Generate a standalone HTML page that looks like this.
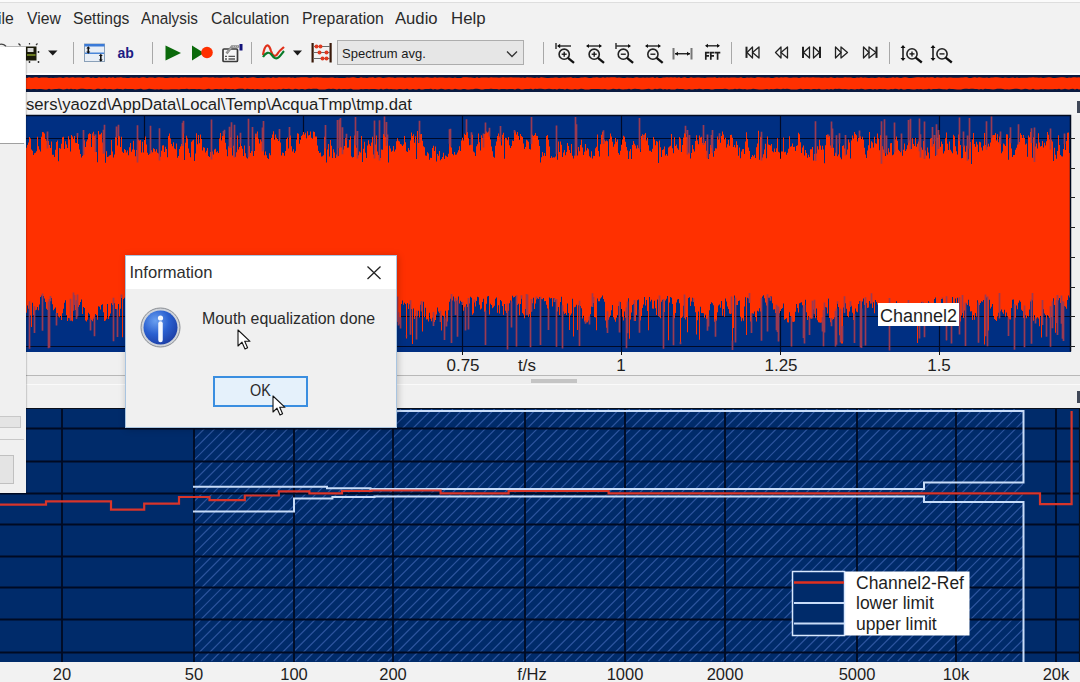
<!DOCTYPE html>
<html><head><meta charset="utf-8"><style>
*{margin:0;padding:0;box-sizing:border-box}
html,body{width:1080px;height:682px;overflow:hidden;background:#f0f0f0;font-family:"Liberation Sans", sans-serif}
.a{position:absolute}
.menu{position:absolute;top:9px;font-size:15px;color:#2a2a2a;line-height:18px;white-space:nowrap;transform:scaleY(1.1);transform-origin:0 0}
.sep{position:absolute;width:1px;background:#a8a8a8}
.lbl{position:absolute;font-size:17px;color:#1e1e1e;line-height:20px;white-space:nowrap}
#wrap{position:absolute;left:0;top:0;width:1080px;height:682px;overflow:hidden;background:#f0f0f0}
</style></head><body><div id="wrap">

<div class="a" style="left:0;top:0;width:1080px;height:2px;background:#fbfbfb"></div>
<div class="a" style="left:0;top:2px;width:1080px;height:1px;background:#dedede"></div>
<div class="a" style="left:0;top:3px;width:1080px;height:70px;background:#f2f2f2"></div>
<div class="menu" style="left:-2.4px;transform:scale(1.05,1.1)">ile</div>
<div class="menu" style="left:26.5px;transform:scale(1.05,1.1)">View</div>
<div class="menu" style="left:72.5px;transform:scale(1.04,1.1)">Settings</div>
<div class="menu" style="left:141px;transform:scale(1.02,1.1)">Analysis</div>
<div class="menu" style="left:211px;transform:scale(1.055,1.1)">Calculation</div>
<div class="menu" style="left:302px;transform:scale(1.054,1.1)">Preparation</div>
<div class="menu" style="left:395px;transform:scale(1.11,1.1)">Audio</div>
<div class="menu" style="left:450.5px;transform:scale(1.12,1.1)">Help</div>
<div class="a" style="left:0;top:73px;width:1080px;height:2px;background:#fdfdfd"></div>
<div class="sep" style="left:73px;top:42px;height:22px"></div>
<div class="sep" style="left:152px;top:42px;height:22px"></div>
<div class="sep" style="left:251px;top:42px;height:22px"></div>
<div class="sep" style="left:543px;top:42px;height:22px"></div>
<div class="sep" style="left:731px;top:42px;height:22px"></div>
<div class="sep" style="left:889px;top:42px;height:22px"></div>
<svg class="a" style="left:0;top:0" width="1080" height="75" viewBox="0 0 1080 75">
<!-- floppy partially hidden -->
<rect x="26" y="46.5" width="10.5" height="14" fill="#1a1a0a"/>
<rect x="27.5" y="48" width="6" height="4" fill="#d8d8d8"/>
<rect x="27" y="54" width="8.5" height="2" fill="#6a7a20"/>
<circle cx="38.5" cy="52" r="0.9" fill="#222"/><circle cx="38.5" cy="62" r="0.9" fill="#222"/><circle cx="29.5" cy="62" r="0.9" fill="#222"/>
<path d="M18.5,43.5l2,2M29.5,43l0,1.5M37.5,43.5l-1.5,1.5" stroke="#333" stroke-width="1.2"/>
<path d="M0,44.3c2,-0.3 4,0 6,2" stroke="#444" stroke-width="1.3" fill="none"/>
<path d="M6,46.8H26" stroke="#a8a8a8" stroke-width="1"/>
<path d="M48,50.5h9.5l-4.75,5z" fill="#1a1a1a"/>
<!-- blue rect icon -->
<rect x="84.5" y="44" width="20" height="17.5" fill="#e8eef6" stroke="#8aa0b8" stroke-width="1"/>
<rect x="84.5" y="44" width="20" height="2.5" fill="#3a7ad8"/>
<rect x="85" y="52.5" width="19" height="1.5" fill="#4a86d8"/>
<path d="M88.3,47.5v5M100.8,55v5.5" stroke="#111" stroke-width="1.6"/>
<path d="M86.3,48.5h4l-2,-2.2zM86.3,51.5h4l-2,2.2zM98.8,56h4l-2,-2.2zM98.8,59.5h4l-2,2.2z" fill="#111"/>
<text x="117.5" y="58" font-family="Liberation Sans" font-weight="bold" font-size="14" fill="#1c1c84">ab</text>
<!-- play -->
<path d="M165.5,45.5L181,53L165.5,60.5z" fill="#0b6a0b"/>
<path d="M192,45.5L204,53L192,60.5z" fill="#0b6a0b"/>
<circle cx="207" cy="52.5" r="5.8" fill="#ff3000"/>
<!-- clipboard -->
<rect x="223" y="49" width="14.5" height="12.5" rx="1" fill="#f6f6f6" stroke="#3a3a3a" stroke-width="1.7"/>
<path d="M226.5,53.5L232,46.5H239" stroke="#8a8a8a" stroke-width="2.6" fill="none"/>
<path d="M226.5,53.5L232,46.5H239" stroke="#d0d0d0" stroke-width="0.8" stroke-dasharray="1,1" fill="none"/>
<path d="M225,56.3h2M228.5,56.3h6.5M225,59h2M228.5,59h6.5" stroke="#555" stroke-width="1.3"/>
<rect x="239.5" y="44" width="3" height="6.5" fill="#12127a"/>
<!-- wave icon -->
<path d="M263,55c2,-12 6,-12 8,-4c2,6 5,6 7,2c2,-3 4,-4 6,-6" stroke="#e0301a" stroke-width="2.2" fill="none"/>
<path d="M263,57c3,-5 6,-5 8,-3c3,4 5,6 8,3c2,-2 4,-5 5,-6" stroke="#0a7a2a" stroke-width="2.2" fill="none"/>
<path d="M293,50.5h9l-4.5,5z" fill="#1a1a1a"/>
<!-- abacus -->
<rect x="311.5" y="43" width="2.2" height="19.5" fill="#3a1a0a"/>
<rect x="329.5" y="43" width="2.2" height="19.5" fill="#3a1a0a"/>
<path d="M313,46.5h17M313,52.5h17M313,58.5h17" stroke="#6a6a6a" stroke-width="1"/>
<circle cx="316.5" cy="46.5" r="2" fill="#e03a20"/><circle cx="320.5" cy="46.5" r="2" fill="#e03a20"/>
<circle cx="319.5" cy="52.5" r="2" fill="#e03a20"/><circle cx="326.5" cy="52.5" r="2" fill="#e03a20"/>
<circle cx="322.5" cy="58.5" r="2" fill="#e03a20"/><circle cx="326.5" cy="58.5" r="2" fill="#e03a20"/>

<path d="M556,43v6M558,46h13" stroke="#333" stroke-width="1.5"/><path d="M557,46l3.2,-2.2v4.4z" fill="#111"/><circle cx="564.2" cy="54.2" r="5.1" fill="none" stroke="#222" stroke-width="1.6"/><path d="M567.9,57.9L574.0,62.8" stroke="#111" stroke-width="2.3"/><path d="M561.7,54.2h5" stroke="#111" stroke-width="1.3"/><path d="M564.2,51.7v5" stroke="#111" stroke-width="1.3"/><path d="M587,46h14" stroke="#333" stroke-width="1.5"/><path d="M586,46l3,-2v4zM602,46l-3,-2v4z" fill="#111"/><circle cx="594.2" cy="54.2" r="5.1" fill="none" stroke="#222" stroke-width="1.6"/><path d="M597.9,57.9L604.0,62.8" stroke="#111" stroke-width="2.3"/><path d="M591.7,54.2h5" stroke="#111" stroke-width="1.3"/><path d="M594.2,51.7v5" stroke="#111" stroke-width="1.3"/><path d="M616,43v6M616,46h14" stroke="#333" stroke-width="1.5"/><path d="M631,46l-3,-2v4z" fill="#111"/><circle cx="623.3" cy="54.2" r="5.1" fill="none" stroke="#222" stroke-width="1.6"/><path d="M627.0,57.9L633.1,62.8" stroke="#111" stroke-width="2.3"/><path d="M620.8,54.2h5" stroke="#111" stroke-width="1.3"/><path d="M646,46h14" stroke="#333" stroke-width="1.5"/><path d="M645,46l3,-2v4zM661,46l-3,-2v4z" fill="#111"/><circle cx="652.9" cy="54.2" r="5.1" fill="none" stroke="#222" stroke-width="1.6"/><path d="M656.6,57.9L662.7,62.8" stroke="#111" stroke-width="2.3"/><path d="M650.4,54.2h5" stroke="#111" stroke-width="1.3"/><path d="M673.5,48v11.5M691.5,48v11.5" stroke="#777" stroke-width="2"/><path d="M675,53.75h15" stroke="#111" stroke-width="1.3"/><path d="M675,53.75l3,-2v4zM690,53.75l-3,-2v4z" fill="#111"/><path d="M706,45.8h13" stroke="#333" stroke-width="1.5"/><path d="M705,45.8l3,-2v4zM720,45.8l-3,-2v4z" fill="#111"/><path d="M705.8,59.8V52.7H709.5M705.8,55.8H709M710.8,59.8V52.7H714.5M710.8,55.8H714M715,52.7H720.3M717.6,52.7V59.8" stroke="#1e1e1e" stroke-width="1.7" fill="none"/><path d="M746.5,46.7v11.2" stroke="#222" stroke-width="2"/><path d="M747.0,52.5L752.5,47.0L752.5,58.0z" fill="none" stroke="#222" stroke-width="1.3" stroke-linejoin="round"/><path d="M752.5,52.5L759.0,47.0L759.0,58.0z" fill="none" stroke="#222" stroke-width="1.3" stroke-linejoin="round"/><path d="M775.5,52.5L781.0,47.0L781.0,58.0z" fill="none" stroke="#222" stroke-width="1.3" stroke-linejoin="round"/><path d="M781.0,52.5L787.5,47.0L787.5,58.0z" fill="none" stroke="#222" stroke-width="1.3" stroke-linejoin="round"/><path d="M803,46.7v11.2M820,46.7v11.2" stroke="#222" stroke-width="2"/><path d="M803.5,52.5L809.5,47.0L809.5,58.0z" fill="none" stroke="#222" stroke-width="1.3" stroke-linejoin="round"/><path d="M819.5,52.5L813.5,47.0L813.5,58.0z" fill="none" stroke="#222" stroke-width="1.3" stroke-linejoin="round"/><path d="M841.0,52.5L835.5,47.0L835.5,58.0z" fill="none" stroke="#222" stroke-width="1.3" stroke-linejoin="round"/><path d="M847.5,52.5L841.0,47.0L841.0,58.0z" fill="none" stroke="#222" stroke-width="1.3" stroke-linejoin="round"/><path d="M869.0,52.5L863.5,47.0L863.5,58.0z" fill="none" stroke="#222" stroke-width="1.3" stroke-linejoin="round"/><path d="M876.0,52.5L869.0,47.0L869.0,58.0z" fill="none" stroke="#222" stroke-width="1.3" stroke-linejoin="round"/><path d="M876.5,46.7v11.2" stroke="#222" stroke-width="2"/><path d="M903.0,46v14" stroke="#222" stroke-width="1.6"/><path d="M903.0,45l-2.5,3h5zM903.0,61l-2.5,-3h5z" fill="#111"/><circle cx="912.0" cy="53.9" r="5.1" fill="none" stroke="#222" stroke-width="1.6"/><path d="M915.7,57.6L921.8,62.5" stroke="#111" stroke-width="2.3"/><path d="M909.5,53.9h5" stroke="#111" stroke-width="1.3"/><path d="M912.0,51.4v5" stroke="#111" stroke-width="1.3"/><path d="M933.0,46v14" stroke="#222" stroke-width="1.6"/><path d="M933.0,45l-2.5,3h5zM933.0,61l-2.5,-3h5z" fill="#111"/><circle cx="942.0" cy="53.9" r="5.1" fill="none" stroke="#222" stroke-width="1.6"/><path d="M945.7,57.6L951.8,62.5" stroke="#111" stroke-width="2.3"/><path d="M939.5,53.9h5" stroke="#111" stroke-width="1.3"/>
</svg>
<div class="a" style="left:337px;top:40px;width:187px;height:25px;background:#e6e6e6;border:1px solid #adadad"></div>
<div class="a" style="left:342px;top:46px;font-size:13px;color:#1a1a1a;line-height:15px;white-space:nowrap">Spectrum avg.</div>
<svg class="a" style="left:505px;top:48px" width="14" height="12"><path d="M2,3.5l5,5l5,-5" stroke="#333" stroke-width="1.3" fill="none"/></svg>
<div class="a" style="left:25px;top:75px;width:1055px;height:17px;background:#0a1a40"></div>
<svg class="a" style="left:0;top:0" width="1080" height="95"><path d="M25,77.3L27,77.9L29,77.2L31,77.7L33,77.7L35,77.3L37,77.3L39,77.9L41,77.6L43,77.6L45,77.6L47,77.5L49,78.0L51,77.7L53,77.9L55,77.8L57,77.7L59,77.4L61,77.6L63,77.9L65,77.5L67,77.3L69,77.7L71,77.6L73,77.3L75,77.7L77,77.6L79,77.4L81,77.5L83,77.9L85,77.4L87,77.3L89,77.3L91,78.0L93,77.5L95,77.9L97,77.9L99,77.3L101,77.7L103,77.5L105,77.6L107,77.9L109,77.2L111,77.7L113,77.3L115,77.9L117,77.6L119,77.4L121,77.2L123,77.8L125,77.8L127,77.9L129,78.0L131,77.6L133,77.8L135,77.7L137,77.5L139,77.9L141,77.4L143,77.2L145,77.5L147,78.0L149,77.5L151,77.6L153,77.6L155,78.0L157,77.6L159,77.3L161,77.6L163,77.5L165,77.9L167,77.9L169,77.7L171,77.4L173,77.8L175,77.5L177,77.6L179,78.0L181,77.3L183,77.5L185,77.2L187,77.5L189,77.4L191,77.5L193,77.4L195,77.5L197,77.4L199,77.6L201,77.7L203,77.3L205,77.3L207,77.3L209,77.5L211,77.4L213,77.3L215,77.7L217,77.4L219,77.7L221,77.7L223,77.6L225,77.5L227,77.5L229,77.3L231,77.9L233,77.5L235,77.4L237,77.3L239,77.6L241,78.0L243,78.0L245,77.2L247,78.0L249,77.7L251,77.5L253,77.3L255,77.4L257,77.9L259,77.9L261,77.7L263,77.9L265,77.7L267,77.5L269,77.6L271,77.9L273,77.3L275,77.8L277,77.7L279,77.3L281,77.6L283,77.6L285,77.5L287,77.5L289,77.2L291,77.7L293,77.4L295,77.9L297,77.5L299,77.6L301,77.2L303,77.3L305,77.2L307,77.3L309,77.7L311,77.7L313,77.2L315,77.6L317,77.2L319,77.6L321,77.5L323,77.7L325,77.8L327,77.8L329,77.8L331,77.4L333,77.5L335,77.9L337,77.7L339,77.9L341,78.0L343,77.9L345,77.9L347,77.6L349,77.8L351,77.6L353,77.2L355,77.6L357,77.9L359,77.9L361,77.3L363,77.7L365,77.7L367,78.0L369,77.6L371,77.5L373,77.3L375,77.9L377,77.6L379,77.3L381,77.6L383,77.9L385,77.8L387,77.6L389,77.3L391,77.6L393,77.6L395,77.9L397,77.5L399,77.6L401,77.5L403,77.6L405,78.0L407,77.6L409,77.4L411,77.4L413,77.9L415,77.2L417,77.6L419,77.4L421,77.6L423,77.7L425,77.6L427,77.3L429,77.4L431,77.7L433,77.7L435,77.3L437,77.8L439,77.5L441,77.6L443,77.6L445,77.8L447,77.7L449,77.6L451,77.7L453,77.9L455,77.5L457,78.0L459,78.0L461,78.0L463,77.2L465,77.3L467,77.2L469,77.5L471,77.6L473,77.8L475,78.0L477,77.3L479,77.9L481,77.6L483,77.5L485,77.4L487,77.5L489,77.7L491,77.3L493,77.6L495,77.4L497,77.5L499,77.7L501,77.4L503,77.2L505,77.6L507,77.5L509,77.6L511,77.3L513,77.4L515,77.4L517,77.4L519,77.5L521,77.8L523,77.6L525,77.9L527,77.3L529,77.6L531,77.4L533,77.7L535,77.9L537,77.4L539,77.9L541,77.3L543,77.4L545,77.7L547,77.9L549,78.0L551,77.7L553,77.7L555,77.6L557,77.4L559,77.9L561,77.8L563,77.6L565,77.7L567,77.6L569,77.4L571,77.3L573,77.9L575,77.8L577,77.9L579,77.9L581,77.6L583,77.6L585,77.3L587,77.4L589,77.9L591,78.0L593,77.4L595,77.5L597,77.3L599,77.8L601,77.8L603,77.3L605,77.8L607,77.3L609,77.6L611,77.2L613,77.3L615,77.3L617,77.8L619,77.6L621,77.7L623,78.0L625,78.0L627,77.5L629,77.7L631,77.8L633,78.0L635,77.6L637,77.3L639,77.8L641,77.7L643,77.6L645,77.7L647,77.6L649,77.7L651,77.4L653,77.3L655,77.9L657,77.3L659,77.9L661,78.0L663,77.4L665,77.4L667,77.2L669,77.6L671,77.3L673,77.5L675,77.3L677,77.8L679,77.2L681,77.9L683,77.4L685,77.3L687,78.0L689,77.9L691,77.2L693,77.7L695,77.7L697,77.4L699,77.4L701,77.7L703,77.7L705,77.9L707,77.6L709,77.6L711,77.6L713,77.6L715,77.2L717,77.9L719,77.4L721,77.7L723,77.6L725,77.8L727,77.6L729,77.7L731,77.4L733,77.5L735,77.4L737,77.8L739,77.8L741,77.3L743,78.0L745,77.9L747,77.5L749,77.8L751,77.5L753,77.8L755,77.9L757,77.3L759,77.2L761,77.5L763,77.6L765,77.7L767,77.4L769,77.5L771,77.9L773,77.9L775,77.4L777,77.3L779,77.7L781,77.2L783,77.5L785,77.3L787,77.3L789,77.8L791,77.8L793,77.4L795,77.6L797,77.4L799,77.9L801,77.4L803,77.3L805,77.5L807,77.3L809,77.6L811,77.5L813,77.3L815,77.6L817,77.4L819,77.4L821,77.8L823,77.8L825,77.6L827,77.8L829,77.7L831,77.2L833,77.8L835,77.9L837,77.5L839,77.7L841,77.7L843,77.8L845,77.2L847,77.5L849,77.5L851,77.4L853,77.9L855,77.9L857,77.6L859,77.8L861,77.3L863,77.7L865,77.5L867,77.7L869,77.9L871,77.8L873,77.8L875,78.0L877,77.7L879,77.3L881,77.8L883,77.4L885,77.8L887,77.9L889,77.8L891,77.7L893,77.3L895,77.7L897,77.3L899,77.8L901,77.9L903,77.5L905,77.3L907,77.5L909,77.9L911,78.0L913,77.7L915,77.5L917,77.3L919,77.3L921,77.6L923,77.2L925,77.7L927,77.3L929,77.5L931,77.2L933,77.3L935,78.0L937,77.3L939,77.5L941,77.8L943,77.4L945,77.6L947,77.7L949,77.5L951,77.5L953,77.8L955,77.8L957,77.8L959,77.7L961,77.4L963,77.5L965,77.2L967,77.3L969,78.0L971,77.9L973,77.6L975,77.2L977,77.7L979,77.3L981,77.6L983,77.7L985,77.7L987,77.4L989,78.0L991,77.6L993,77.6L995,77.3L997,77.3L999,77.5L1001,77.7L1003,77.9L1005,77.6L1007,77.7L1009,77.9L1011,77.7L1013,77.5L1015,78.0L1017,77.5L1019,78.0L1021,77.7L1023,77.8L1025,77.8L1027,77.7L1029,77.6L1031,77.6L1033,77.3L1035,77.5L1037,77.5L1039,77.7L1041,77.4L1043,77.9L1045,77.8L1047,77.6L1049,77.2L1051,77.6L1053,78.0L1055,77.9L1057,77.8L1059,77.6L1061,77.3L1063,77.2L1065,77.6L1067,77.9L1069,77.6L1071,77.8L1073,77.3L1075,77.2L1077,77.6L1079,77.3L1081,77.8L1081,89.3L1079,89.4L1077,88.7L1075,89.4L1073,88.8L1071,89.1L1069,89.5L1067,89.2L1065,88.7L1063,89.2L1061,89.4L1059,88.8L1057,89.2L1055,88.9L1053,89.3L1051,89.3L1049,89.3L1047,89.2L1045,89.1L1043,89.6L1041,89.0L1039,89.4L1037,89.5L1035,89.5L1033,88.7L1031,89.5L1029,89.5L1027,89.0L1025,88.8L1023,89.2L1021,89.4L1019,89.1L1017,88.7L1015,88.7L1013,89.1L1011,89.3L1009,89.6L1007,89.3L1005,89.4L1003,89.0L1001,88.8L999,88.8L997,88.8L995,89.3L993,89.5L991,89.2L989,89.0L987,88.9L985,88.7L983,89.4L981,89.1L979,89.5L977,88.9L975,88.9L973,88.8L971,88.8L969,89.0L967,88.7L965,88.8L963,88.9L961,89.4L959,89.6L957,89.4L955,89.3L953,88.9L951,89.1L949,88.7L947,89.5L945,89.3L943,89.2L941,89.1L939,88.7L937,89.1L935,88.9L933,89.1L931,89.4L929,88.7L927,89.2L925,89.2L923,89.5L921,89.1L919,89.3L917,88.9L915,89.6L913,89.6L911,89.2L909,89.1L907,89.0L905,89.4L903,89.4L901,88.8L899,89.5L897,89.1L895,88.8L893,89.2L891,89.1L889,89.6L887,89.5L885,89.0L883,89.2L881,89.0L879,89.0L877,89.4L875,89.1L873,89.5L871,89.1L869,89.0L867,89.2L865,89.5L863,89.0L861,88.7L859,89.3L857,88.9L855,89.5L853,89.2L851,88.9L849,89.4L847,89.3L845,89.1L843,89.2L841,89.1L839,88.8L837,89.1L835,88.8L833,89.6L831,89.0L829,89.4L827,89.0L825,89.4L823,89.6L821,89.5L819,88.8L817,89.3L815,88.9L813,88.9L811,89.6L809,88.9L807,88.9L805,88.9L803,89.5L801,88.7L799,88.9L797,89.4L795,89.5L793,89.6L791,89.4L789,88.9L787,88.7L785,89.1L783,88.7L781,89.3L779,89.1L777,88.7L775,89.0L773,89.3L771,88.9L769,89.6L767,89.0L765,89.2L763,89.5L761,89.4L759,89.4L757,89.3L755,88.9L753,88.8L751,89.2L749,89.2L747,89.5L745,88.9L743,89.3L741,89.0L739,88.8L737,89.3L735,88.7L733,89.2L731,89.3L729,89.5L727,88.9L725,88.8L723,89.1L721,89.1L719,89.1L717,89.0L715,89.1L713,89.4L711,89.4L709,88.9L707,89.1L705,88.9L703,89.5L701,89.0L699,88.8L697,89.2L695,89.0L693,89.5L691,89.5L689,88.9L687,89.4L685,89.6L683,88.9L681,89.0L679,88.9L677,88.8L675,89.5L673,89.5L671,89.5L669,89.0L667,89.4L665,89.1L663,89.5L661,88.7L659,88.8L657,89.3L655,88.8L653,89.5L651,89.4L649,88.8L647,89.1L645,89.2L643,89.4L641,89.5L639,88.9L637,89.1L635,88.8L633,88.9L631,89.4L629,88.8L627,89.3L625,89.3L623,89.4L621,89.3L619,88.7L617,89.3L615,88.9L613,88.8L611,89.2L609,89.6L607,89.4L605,89.1L603,89.3L601,89.3L599,89.1L597,88.9L595,89.1L593,89.0L591,89.0L589,89.4L587,89.5L585,89.6L583,89.0L581,88.7L579,89.3L577,89.4L575,88.9L573,89.6L571,89.4L569,89.2L567,88.7L565,89.6L563,89.1L561,89.0L559,88.8L557,89.4L555,89.1L553,89.2L551,88.9L549,88.7L547,88.9L545,89.2L543,88.9L541,88.8L539,88.8L537,89.0L535,88.8L533,89.5L531,88.8L529,89.0L527,89.1L525,89.0L523,89.6L521,89.4L519,88.8L517,88.8L515,89.4L513,89.1L511,89.1L509,88.9L507,89.2L505,89.0L503,89.0L501,88.9L499,89.5L497,89.0L495,89.0L493,89.0L491,88.8L489,88.9L487,88.9L485,89.0L483,89.4L481,89.4L479,89.1L477,88.8L475,88.8L473,89.2L471,89.3L469,89.5L467,89.5L465,88.9L463,88.9L461,89.4L459,89.6L457,89.3L455,88.8L453,89.5L451,89.4L449,89.1L447,89.3L445,89.4L443,88.9L441,88.8L439,89.3L437,89.5L435,89.0L433,89.4L431,88.8L429,88.9L427,89.1L425,89.0L423,89.5L421,89.4L419,88.8L417,89.4L415,89.4L413,89.1L411,89.5L409,89.5L407,88.7L405,89.3L403,89.6L401,89.0L399,89.0L397,89.4L395,89.2L393,89.3L391,88.9L389,89.3L387,88.8L385,88.9L383,89.4L381,88.8L379,89.5L377,89.3L375,88.9L373,89.0L371,89.0L369,89.2L367,89.1L365,89.1L363,89.2L361,88.9L359,89.4L357,89.5L355,89.5L353,89.6L351,88.8L349,89.0L347,89.2L345,88.9L343,89.0L341,89.3L339,88.7L337,89.4L335,88.9L333,88.8L331,89.0L329,88.7L327,89.0L325,89.4L323,89.4L321,89.5L319,89.4L317,88.8L315,88.8L313,88.7L311,89.1L309,88.7L307,89.0L305,89.6L303,89.1L301,88.9L299,89.4L297,89.1L295,88.8L293,89.4L291,89.3L289,88.8L287,89.1L285,89.1L283,88.8L281,89.5L279,89.0L277,89.6L275,89.4L273,89.3L271,89.4L269,89.1L267,89.5L265,89.1L263,89.4L261,89.4L259,89.3L257,89.1L255,89.5L253,89.1L251,89.2L249,89.0L247,88.8L245,89.5L243,88.8L241,88.8L239,88.7L237,89.0L235,89.4L233,89.1L231,89.3L229,88.9L227,89.0L225,88.7L223,89.5L221,89.0L219,89.2L217,88.9L215,89.1L213,89.5L211,89.4L209,88.8L207,89.0L205,89.4L203,89.5L201,89.2L199,89.0L197,89.2L195,89.0L193,89.0L191,89.1L189,89.2L187,88.8L185,89.0L183,89.0L181,89.1L179,89.4L177,89.3L175,89.2L173,89.2L171,89.2L169,89.5L167,89.6L165,89.5L163,89.5L161,88.9L159,89.5L157,89.2L155,89.4L153,89.2L151,89.0L149,88.8L147,89.3L145,89.5L143,89.5L141,88.7L139,88.9L137,89.3L135,89.4L133,89.0L131,88.9L129,89.0L127,88.9L125,88.7L123,89.5L121,89.1L119,89.0L117,88.7L115,89.3L113,89.5L111,89.0L109,88.9L107,89.3L105,88.8L103,89.1L101,89.2L99,88.7L97,88.8L95,89.6L93,89.4L91,88.9L89,89.1L87,89.3L85,89.1L83,88.7L81,88.8L79,89.0L77,89.4L75,89.1L73,89.3L71,88.8L69,89.2L67,88.8L65,89.3L63,89.4L61,88.9L59,88.8L57,88.9L55,89.0L53,89.3L51,89.5L49,88.8L47,89.6L45,89.6L43,89.3L41,89.0L39,89.1L37,89.3L35,89.0L33,89.1L31,89.2L29,89.0L27,88.9L25,89.2Z" fill="#ff3000"/></svg>
<div class="a" style="left:0;top:92px;width:1080px;height:23px;background:#f3f3f3"></div>
<div class="a" style="left:26px;top:96px;font-size:16.7px;color:#1e1e1e;line-height:18px;white-space:nowrap">sers\yaozd\AppData\Local\Temp\AcquaTmp\tmp.dat</div>
<div class="a" style="left:1077px;top:101px;width:3px;height:12px;background:#404858"></div>
<div class="a" style="left:25px;top:115px;width:1046px;height:237px;background:#002f82"></div>
<svg class="a" style="left:0;top:0" width="1080" height="400">
<path d="M25,138.5H1070M25,168.5H1070M25,197.5H1070M25,227.5H1070M25,257.5H1070M25,287.5H1070M25,316.5H1070M25,346.5H1070M144.5,115V352M303.5,115V352M462.5,115V352M621.5,115V352M780.5,115V352M939.5,115V352" stroke="#000a28" stroke-width="1.2" fill="none"/>
<path d="M25,143.0L25,143.0L26,143.0L26,147.8L27,147.8L27,144.9L28,144.9L28,142.4L29,142.4L29,137.0L30,137.0L30,138.4L31,138.4L31,149.5L32,149.5L32,150.8L33,150.8L33,155.0L34,155.0L34,153.2L35,153.2L35,152.8L36,152.8L36,151.3L37,151.3L37,136.7L38,136.7L38,146.2L39,146.2L39,149.6L40,149.6L40,151.4L41,151.4L41,136.7L42,136.7L42,132.0L43,132.0L43,132.2L44,132.2L44,133.5L45,133.5L45,138.8L46,138.8L46,140.8L47,140.8L47,146.6L48,146.6L48,140.9L49,140.9L49,145.0L50,145.0L50,148.1L51,148.1L51,141.6L52,141.6L52,154.8L53,154.8L53,154.7L54,154.7L54,157.0L55,157.0L55,149.7L56,149.7L56,142.1L57,142.1L57,140.6L58,140.6L58,161.3L59,161.3L59,147.9L60,147.9L60,148.7L61,148.7L61,143.7L62,143.7L62,137.3L63,137.3L63,136.8L64,136.8L64,149.1L65,149.1L65,141.2L66,141.2L66,144.6L67,144.6L67,148.1L68,148.1L68,136.2L69,136.2L69,139.6L70,139.6L70,151.6L71,151.6L71,135.1L72,135.1L72,136.5L73,136.5L73,138.7L74,138.7L74,135.9L75,135.9L75,142.7L76,142.7L76,143.1L77,143.1L77,134.6L78,134.6L78,143.9L79,143.9L79,149.6L80,149.6L80,154.0L81,154.0L81,157.4L82,157.4L82,155.8L83,155.8L83,153.1L84,153.1L84,140.2L85,140.2L85,146.9L86,146.9L86,141.4L87,141.4L87,139.4L88,139.4L88,134.2L89,134.2L89,133.2L90,133.2L90,134.1L91,134.1L91,147.0L92,147.0L92,133.6L93,133.6L93,131.8L94,131.8L94,135.9L95,135.9L95,150.0L96,150.0L96,152.1L97,152.1L97,162.2L98,162.2L98,130.9L99,130.9L99,134.5L100,134.5L100,134.2L101,134.2L101,132.8L102,132.8L102,142.5L103,142.5L103,151.8L104,151.8L104,150.4L105,150.4L105,162.7L106,162.7L106,151.3L107,151.3L107,157.1L108,157.1L108,156.4L109,156.4L109,155.6L110,155.6L110,155.1L111,155.1L111,140.0L112,140.0L112,151.6L113,151.6L113,157.5L114,157.5L114,154.6L115,154.6L115,137.0L116,137.0L116,136.0L117,136.0L117,145.5L118,145.5L118,133.9L119,133.9L119,136.3L120,136.3L120,147.1L121,147.1L121,136.8L122,136.8L122,151.8L123,151.8L123,152.9L124,152.9L124,149.0L125,149.0L125,149.9L126,149.9L126,152.5L127,152.5L127,150.6L128,150.6L128,155.3L129,155.3L129,147.3L130,147.3L130,143.1L131,143.1L131,151.7L132,151.7L132,149.4L133,149.4L133,140.8L134,140.8L134,149.8L135,149.8L135,156.3L136,156.3L136,150.1L137,150.1L137,160.6L138,160.6L138,139.5L139,139.5L139,140.5L140,140.5L140,140.0L141,140.0L141,152.4L142,152.4L142,141.7L143,141.7L143,152.4L144,152.4L144,139.9L145,139.9L145,136.6L146,136.6L146,144.4L147,144.4L147,152.8L148,152.8L148,155.0L149,155.0L149,153.7L150,153.7L150,151.6L151,151.6L151,150.3L152,150.3L152,152.2L153,152.2L153,148.3L154,148.3L154,149.1L155,149.1L155,151.6L156,151.6L156,149.2L157,149.2L157,152.8L158,152.8L158,153.6L159,153.6L159,158.5L160,158.5L160,156.7L161,156.7L161,150.7L162,150.7L162,145.6L163,145.6L163,145.3L164,145.3L164,152.0L165,152.0L165,146.8L166,146.8L166,149.1L167,149.1L167,157.3L168,157.3L168,136.1L169,136.1L169,133.5L170,133.5L170,138.4L171,138.4L171,143.9L172,143.9L172,146.3L173,146.3L173,142.3L174,142.3L174,148.6L175,148.6L175,149.3L176,149.3L176,143.5L177,143.5L177,157.7L178,157.7L178,156.0L179,156.0L179,148.9L180,148.9L180,146.6L181,146.6L181,144.1L182,144.1L182,144.0L183,144.0L183,131.4L184,131.4L184,160.0L185,160.0L185,142.7L186,142.7L186,135.8L187,135.8L187,138.5L188,138.5L188,148.4L189,148.4L189,153.0L190,153.0L190,157.3L191,157.3L191,141.8L192,141.8L192,140.4L193,140.4L193,139.7L194,139.7L194,160.9L195,160.9L195,153.5L196,153.5L196,133.3L197,133.3L197,144.3L198,144.3L198,135.0L199,135.0L199,143.3L200,143.3L200,134.5L201,134.5L201,139.0L202,139.0L202,150.5L203,150.5L203,147.2L204,147.2L204,147.8L205,147.8L205,152.4L206,152.4L206,150.7L207,150.7L207,147.9L208,147.9L208,156.0L209,156.0L209,157.1L210,157.1L210,152.1L211,152.1L211,157.6L212,157.6L212,151.4L213,151.4L213,154.6L214,154.6L214,149.6L215,149.6L215,148.8L216,148.8L216,152.3L217,152.3L217,151.2L218,151.2L218,153.1L219,153.1L219,138.6L220,138.6L220,133.1L221,133.1L221,140.4L222,140.4L222,135.9L223,135.9L223,133.8L224,133.8L224,131.8L225,131.8L225,142.8L226,142.8L226,149.5L227,149.5L227,156.2L228,156.2L228,146.2L229,146.2L229,145.8L230,145.8L230,137.2L231,137.2L231,145.9L232,145.9L232,155.6L233,155.6L233,145.8L234,145.8L234,155.5L235,155.5L235,156.7L236,156.7L236,152.3L237,152.3L237,135.6L238,135.6L238,149.5L239,149.5L239,147.0L240,147.0L240,141.5L241,141.5L241,146.0L242,146.0L242,148.8L243,148.8L243,156.1L244,156.1L244,145.4L245,145.4L245,153.3L246,153.3L246,157.4L247,157.4L247,158.5L248,158.5L248,154.9L249,154.9L249,146.1L250,146.1L250,152.9L251,152.9L251,150.9L252,150.9L252,149.6L253,149.6L253,156.1L254,156.1L254,151.1L255,151.1L255,133.8L256,133.8L256,135.1L257,135.1L257,131.5L258,131.5L258,138.8L259,138.8L259,143.6L260,143.6L260,139.5L261,139.5L261,141.5L262,141.5L262,149.4L263,149.4L263,148.3L264,148.3L264,155.3L265,155.3L265,151.6L266,151.6L266,155.3L267,155.3L267,157.9L268,157.9L268,158.9L269,158.9L269,153.3L270,153.3L270,155.3L271,155.3L271,138.1L272,138.1L272,134.4L273,134.4L273,131.2L274,131.2L274,139.7L275,139.7L275,134.4L276,134.4L276,137.7L277,137.7L277,139.0L278,139.0L278,141.1L279,141.1L279,138.3L280,138.3L280,142.6L281,142.6L281,155.4L282,155.4L282,152.4L283,152.4L283,153.1L284,153.1L284,155.7L285,155.7L285,151.1L286,151.1L286,139.1L287,139.1L287,137.6L288,137.6L288,148.6L289,148.6L289,135.7L290,135.7L290,135.4L291,135.4L291,146.2L292,146.2L292,151.6L293,151.6L293,149.2L294,149.2L294,153.1L295,153.1L295,151.3L296,151.3L296,139.8L297,139.8L297,133.3L298,133.3L298,133.8L299,133.8L299,143.7L300,143.7L300,139.9L301,139.9L301,136.0L302,136.0L302,134.8L303,134.8L303,132.0L304,132.0L304,134.6L305,134.6L305,132.8L306,132.8L306,138.2L307,138.2L307,131.3L308,131.3L308,135.4L309,135.4L309,135.1L310,135.1L310,131.4L311,131.4L311,137.8L312,137.8L312,138.5L313,138.5L313,131.5L314,131.5L314,131.9L315,131.9L315,136.4L316,136.4L316,136.6L317,136.6L317,145.5L318,145.5L318,150.9L319,150.9L319,153.1L320,153.1L320,152.4L321,152.4L321,156.6L322,156.6L322,156.2L323,156.2L323,155.2L324,155.2L324,136.8L325,136.8L325,146.6L326,146.6L326,162.6L327,162.6L327,149.4L328,149.4L328,143.9L329,143.9L329,156.4L330,156.4L330,140.1L331,140.1L331,145.7L332,145.7L332,158.0L333,158.0L333,149.3L334,149.3L334,152.5L335,152.5L335,158.1L336,158.1L336,154.4L337,154.4L337,154.4L338,154.4L338,155.9L339,155.9L339,146.1L340,146.1L340,144.9L341,144.9L341,147.3L342,147.3L342,152.3L343,152.3L343,149.4L344,149.4L344,146.1L345,146.1L345,138.1L346,138.1L346,138.2L347,138.2L347,147.7L348,147.7L348,147.4L349,147.4L349,139.9L350,139.9L350,136.3L351,136.3L351,156.6L352,156.6L352,157.6L353,157.6L353,156.9L354,156.9L354,135.6L355,135.6L355,143.3L356,143.3L356,147.8L357,147.8L357,156.5L358,156.5L358,155.2L359,155.2L359,151.5L360,151.5L360,152.6L361,152.6L361,135.9L362,135.9L362,162.0L363,162.0L363,148.7L364,148.7L364,141.7L365,141.7L365,152.8L366,152.8L366,158.0L367,158.0L367,145.6L368,145.6L368,140.2L369,140.2L369,144.3L370,144.3L370,146.1L371,146.1L371,142.5L372,142.5L372,136.7L373,136.7L373,154.6L374,154.6L374,156.5L375,156.5L375,144.5L376,144.5L376,135.6L377,135.6L377,151.5L378,151.5L378,155.0L379,155.0L379,158.5L380,158.5L380,158.1L381,158.1L381,149.6L382,149.6L382,149.8L383,149.8L383,133.9L384,133.9L384,133.8L385,133.8L385,136.8L386,136.8L386,143.7L387,143.7L387,138.8L388,138.8L388,162.6L389,162.6L389,145.7L390,145.7L390,148.4L391,148.4L391,151.7L392,151.7L392,150.7L393,150.7L393,146.0L394,146.0L394,151.5L395,151.5L395,149.4L396,149.4L396,141.2L397,141.2L397,138.2L398,138.2L398,140.7L399,140.7L399,141.5L400,141.5L400,144.1L401,144.1L401,144.5L402,144.5L402,146.1L403,146.1L403,144.6L404,144.6L404,136.1L405,136.1L405,142.2L406,142.2L406,151.3L407,151.3L407,151.9L408,151.9L408,148.0L409,148.0L409,150.2L410,150.2L410,140.6L411,140.6L411,132.5L412,132.5L412,136.1L413,136.1L413,134.2L414,134.2L414,142.8L415,142.8L415,136.2L416,136.2L416,159.0L417,159.0L417,131.1L418,131.1L418,142.9L419,142.9L419,140.8L420,140.8L420,134.2L421,134.2L421,133.9L422,133.9L422,140.7L423,140.7L423,146.3L424,146.3L424,147.2L425,147.2L425,155.6L426,155.6L426,155.8L427,155.8L427,152.3L428,152.3L428,153.4L429,153.4L429,159.8L430,159.8L430,157.8L431,157.8L431,158.0L432,158.0L432,148.1L433,148.1L433,145.7L434,145.7L434,150.9L435,150.9L435,146.4L436,146.4L436,161.4L437,161.4L437,154.0L438,154.0L438,155.7L439,155.7L439,151.0L440,151.0L440,160.3L441,160.3L441,158.9L442,158.9L442,156.9L443,156.9L443,152.7L444,152.7L444,159.1L445,159.1L445,155.4L446,155.4L446,156.3L447,156.3L447,157.1L448,157.1L448,153.8L449,153.8L449,141.7L450,141.7L450,144.5L451,144.5L451,147.6L452,147.6L452,154.1L453,154.1L453,155.3L454,155.3L454,152.1L455,152.1L455,154.7L456,154.7L456,154.5L457,154.5L457,152.6L458,152.6L458,150.2L459,150.2L459,146.3L460,146.3L460,150.9L461,150.9L461,140.5L462,140.5L462,137.8L463,137.8L463,140.5L464,140.5L464,133.8L465,133.8L465,134.9L466,134.9L466,131.3L467,131.3L467,132.1L468,132.1L468,138.3L469,138.3L469,145.2L470,145.2L470,144.7L471,144.7L471,143.0L472,143.0L472,134.7L473,134.7L473,151.6L474,151.6L474,152.6L475,152.6L475,155.9L476,155.9L476,146.2L477,146.2L477,144.2L478,144.2L478,133.6L479,133.6L479,142.3L480,142.3L480,150.5L481,150.5L481,135.2L482,135.2L482,138.1L483,138.1L483,145.6L484,145.6L484,134.1L485,134.1L485,131.4L486,131.4L486,131.5L487,131.5L487,132.4L488,132.4L488,131.5L489,131.5L489,134.5L490,134.5L490,139.4L491,139.4L491,146.6L492,146.6L492,151.2L493,151.2L493,156.8L494,156.8L494,157.8L495,157.8L495,145.8L496,145.8L496,141.5L497,141.5L497,135.9L498,135.9L498,133.6L499,133.6L499,136.5L500,136.5L500,139.5L501,139.5L501,145.5L502,145.5L502,134.8L503,134.8L503,132.7L504,132.7L504,158.7L505,158.7L505,137.7L506,137.7L506,138.3L507,138.3L507,140.3L508,140.3L508,136.9L509,136.9L509,145.2L510,145.2L510,147.9L511,147.9L511,146.1L512,146.1L512,140.4L513,140.4L513,140.9L514,140.9L514,131.1L515,131.1L515,131.4L516,131.4L516,134.4L517,134.4L517,132.0L518,132.0L518,136.0L519,136.0L519,140.1L520,140.1L520,134.0L521,134.0L521,136.0L522,136.0L522,137.1L523,137.1L523,143.4L524,143.4L524,148.9L525,148.9L525,147.1L526,147.1L526,139.7L527,139.7L527,140.6L528,140.6L528,141.8L529,141.8L529,148.9L530,148.9L530,149.6L531,149.6L531,142.1L532,142.1L532,134.7L533,134.7L533,135.9L534,135.9L534,134.9L535,134.9L535,133.1L536,133.1L536,135.8L537,135.8L537,136.0L538,136.0L538,139.9L539,139.9L539,146.0L540,146.0L540,162.4L541,162.4L541,157.2L542,157.2L542,152.0L543,152.0L543,155.7L544,155.7L544,153.1L545,153.1L545,156.1L546,156.1L546,136.0L547,136.0L547,134.9L548,134.9L548,139.8L549,139.8L549,146.6L550,146.6L550,158.0L551,158.0L551,156.2L552,156.2L552,157.8L553,157.8L553,157.3L554,157.3L554,157.5L555,157.5L555,156.4L556,156.4L556,152.1L557,152.1L557,159.7L558,159.7L558,141.6L559,141.6L559,151.9L560,151.9L560,141.4L561,141.4L561,144.8L562,144.8L562,157.1L563,157.1L563,152.6L564,152.6L564,150.0L565,150.0L565,155.2L566,155.2L566,152.0L567,152.0L567,143.1L568,143.1L568,145.9L569,145.9L569,150.0L570,150.0L570,152.9L571,152.9L571,144.1L572,144.1L572,155.7L573,155.7L573,158.4L574,158.4L574,155.5L575,155.5L575,153.7L576,153.7L576,147.5L577,147.5L577,155.4L578,155.4L578,147.1L579,147.1L579,151.2L580,151.2L580,145.1L581,145.1L581,139.8L582,139.8L582,147.4L583,147.4L583,155.0L584,155.0L584,151.7L585,151.7L585,143.9L586,143.9L586,150.6L587,150.6L587,148.1L588,148.1L588,149.2L589,149.2L589,156.3L590,156.3L590,157.5L591,157.5L591,151.2L592,151.2L592,158.5L593,158.5L593,155.7L594,155.7L594,156.1L595,156.1L595,148.3L596,148.3L596,146.7L597,146.7L597,134.5L598,134.5L598,151.1L599,151.1L599,156.4L600,156.4L600,144.2L601,144.2L601,134.7L602,134.7L602,131.8L603,131.8L603,142.1L604,142.1L604,139.8L605,139.8L605,141.3L606,141.3L606,140.4L607,140.4L607,141.3L608,141.3L608,156.3L609,156.3L609,139.0L610,139.0L610,133.4L611,133.4L611,136.4L612,136.4L612,141.7L613,141.7L613,146.7L614,146.7L614,144.2L615,144.2L615,137.9L616,137.9L616,141.7L617,141.7L617,139.4L618,139.4L618,153.0L619,153.0L619,154.7L620,154.7L620,150.7L621,150.7L621,144.8L622,144.8L622,139.5L623,139.5L623,135.7L624,135.7L624,136.7L625,136.7L625,141.8L626,141.8L626,147.1L627,147.1L627,150.6L628,150.6L628,159.0L629,159.0L629,151.2L630,151.2L630,148.9L631,148.9L631,158.9L632,158.9L632,144.9L633,144.9L633,140.9L634,140.9L634,143.8L635,143.8L635,145.5L636,145.5L636,148.5L637,148.5L637,145.2L638,145.2L638,148.0L639,148.0L639,147.2L640,147.2L640,152.0L641,152.0L641,135.9L642,135.9L642,134.3L643,134.3L643,137.6L644,137.6L644,134.4L645,134.4L645,133.1L646,133.1L646,140.4L647,140.4L647,137.7L648,137.7L648,145.3L649,145.3L649,150.8L650,150.8L650,150.8L651,150.8L651,152.1L652,152.1L652,148.7L653,148.7L653,137.0L654,137.0L654,139.6L655,139.6L655,145.3L656,145.3L656,141.0L657,141.0L657,141.8L658,141.8L658,163.1L659,163.1L659,140.5L660,140.5L660,147.3L661,147.3L661,156.9L662,156.9L662,150.1L663,150.1L663,149.3L664,149.3L664,146.4L665,146.4L665,155.6L666,155.6L666,154.0L667,154.0L667,155.7L668,155.7L668,147.5L669,147.5L669,146.4L670,146.4L670,145.8L671,145.8L671,134.1L672,134.1L672,148.2L673,148.2L673,153.2L674,153.2L674,137.3L675,137.3L675,145.9L676,145.9L676,144.5L677,144.5L677,148.2L678,148.2L678,149.7L679,149.7L679,136.9L680,136.9L680,138.4L681,138.4L681,152.1L682,152.1L682,145.0L683,145.0L683,137.5L684,137.5L684,133.3L685,133.3L685,132.1L686,132.1L686,137.0L687,137.0L687,152.5L688,152.5L688,152.6L689,152.6L689,151.5L690,151.5L690,158.5L691,158.5L691,153.1L692,153.1L692,145.1L693,145.1L693,149.2L694,149.2L694,151.5L695,151.5L695,141.1L696,141.1L696,135.2L697,135.2L697,140.4L698,140.4L698,144.2L699,144.2L699,135.6L700,135.6L700,137.5L701,137.5L701,136.8L702,136.8L702,143.1L703,143.1L703,143.0L704,143.0L704,143.1L705,143.1L705,141.1L706,141.1L706,150.7L707,150.7L707,156.3L708,156.3L708,159.0L709,159.0L709,153.9L710,153.9L710,145.1L711,145.1L711,145.7L712,145.7L712,151.0L713,151.0L713,156.8L714,156.8L714,151.1L715,151.1L715,148.3L716,148.3L716,148.5L717,148.5L717,136.4L718,136.4L718,139.5L719,139.5L719,137.0L720,137.0L720,142.7L721,142.7L721,136.0L722,136.0L722,131.5L723,131.5L723,134.5L724,134.5L724,139.6L725,139.6L725,137.8L726,137.8L726,147.4L727,147.4L727,144.3L728,144.3L728,139.9L729,139.9L729,145.7L730,145.7L730,135.0L731,135.0L731,134.7L732,134.7L732,137.8L733,137.8L733,147.1L734,147.1L734,145.0L735,145.0L735,147.4L736,147.4L736,141.3L737,141.3L737,145.1L738,145.1L738,155.7L739,155.7L739,147.5L740,147.5L740,158.2L741,158.2L741,151.6L742,151.6L742,149.3L743,149.3L743,148.9L744,148.9L744,154.1L745,154.1L745,141.5L746,141.5L746,132.2L747,132.2L747,138.9L748,138.9L748,147.4L749,147.4L749,151.1L750,151.1L750,159.0L751,159.0L751,157.0L752,157.0L752,155.0L753,155.0L753,156.3L754,156.3L754,154.8L755,154.8L755,158.1L756,158.1L756,147.3L757,147.3L757,143.4L758,143.4L758,130.7L759,130.7L759,159.7L760,159.7L760,136.7L761,136.7L761,158.6L762,158.6L762,157.6L763,157.6L763,154.3L764,154.3L764,149.4L765,149.4L765,143.7L766,143.7L766,158.2L767,158.2L767,136.6L768,136.6L768,144.4L769,144.4L769,144.9L770,144.9L770,145.5L771,145.5L771,143.9L772,143.9L772,151.3L773,151.3L773,152.3L774,152.3L774,148.6L775,148.6L775,151.9L776,151.9L776,148.2L777,148.2L777,138.3L778,138.3L778,151.8L779,151.8L779,152.4L780,152.4L780,158.7L781,158.7L781,151.5L782,151.5L782,151.5L783,151.5L783,137.4L784,137.4L784,152.2L785,152.2L785,151.8L786,151.8L786,154.7L787,154.7L787,152.7L788,152.7L788,148.8L789,148.8L789,136.2L790,136.2L790,146.7L791,146.7L791,146.3L792,146.3L792,143.5L793,143.5L793,146.9L794,146.9L794,146.8L795,146.8L795,151.1L796,151.1L796,145.9L797,145.9L797,145.3L798,145.3L798,132.8L799,132.8L799,134.2L800,134.2L800,142.3L801,142.3L801,153.1L802,153.1L802,147.5L803,147.5L803,145.5L804,145.5L804,155.5L805,155.5L805,150.0L806,150.0L806,153.0L807,153.0L807,157.7L808,157.7L808,154.7L809,154.7L809,157.1L810,157.1L810,149.3L811,149.3L811,149.2L812,149.2L812,146.9L813,146.9L813,160.4L814,160.4L814,153.9L815,153.9L815,159.0L816,159.0L816,153.6L817,153.6L817,146.3L818,146.3L818,149.6L819,149.6L819,139.7L820,139.7L820,145.6L821,145.6L821,149.8L822,149.8L822,145.8L823,145.8L823,149.6L824,149.6L824,163.2L825,163.2L825,145.3L826,145.3L826,135.0L827,135.0L827,134.6L828,134.6L828,134.9L829,134.9L829,135.9L830,135.9L830,145.6L831,145.6L831,146.0L832,146.0L832,142.4L833,142.4L833,147.8L834,147.8L834,156.1L835,156.1L835,152.8L836,152.8L836,152.4L837,152.4L837,156.3L838,156.3L838,154.4L839,154.4L839,141.4L840,141.4L840,157.4L841,157.4L841,159.3L842,159.3L842,146.1L843,146.1L843,145.3L844,145.3L844,148.5L845,148.5L845,153.6L846,153.6L846,154.5L847,154.5L847,149.4L848,149.4L848,139.6L849,139.6L849,142.4L850,142.4L850,158.6L851,158.6L851,140.5L852,140.5L852,135.6L853,135.6L853,138.6L854,138.6L854,132.1L855,132.1L855,134.1L856,134.1L856,135.2L857,135.2L857,141.6L858,141.6L858,137.9L859,137.9L859,135.2L860,135.2L860,136.2L861,136.2L861,138.9L862,138.9L862,136.8L863,136.8L863,139.8L864,139.8L864,147.7L865,147.7L865,154.5L866,154.5L866,158.1L867,158.1L867,150.6L868,150.6L868,145.2L869,145.2L869,132.0L870,132.0L870,148.3L871,148.3L871,141.3L872,141.3L872,142.5L873,142.5L873,147.6L874,147.6L874,136.8L875,136.8L875,143.2L876,143.2L876,143.7L877,143.7L877,133.4L878,133.4L878,138.5L879,138.5L879,150.2L880,150.2L880,135.2L881,135.2L881,161.7L882,161.7L882,146.3L883,146.3L883,149.5L884,149.5L884,150.9L885,150.9L885,156.1L886,156.1L886,151.3L887,151.3L887,154.4L888,154.4L888,148.3L889,148.3L889,152.2L890,152.2L890,143.2L891,143.2L891,143.1L892,143.1L892,155.3L893,155.3L893,154.5L894,154.5L894,150.2L895,150.2L895,139.4L896,139.4L896,136.4L897,136.4L897,140.8L898,140.8L898,149.7L899,149.7L899,151.0L900,151.0L900,152.3L901,152.3L901,149.3L902,149.3L902,155.7L903,155.7L903,149.8L904,149.8L904,143.6L905,143.6L905,150.9L906,150.9L906,149.2L907,149.2L907,145.3L908,145.3L908,140.7L909,140.7L909,140.4L910,140.4L910,147.2L911,147.2L911,149.0L912,149.0L912,138.3L913,138.3L913,144.1L914,144.1L914,145.9L915,145.9L915,138.1L916,138.1L916,146.7L917,146.7L917,143.8L918,143.8L918,141.6L919,141.6L919,149.2L920,149.2L920,155.6L921,155.6L921,147.4L922,147.4L922,149.8L923,149.8L923,141.0L924,141.0L924,156.9L925,156.9L925,150.4L926,150.4L926,155.5L927,155.5L927,147.6L928,147.6L928,152.4L929,152.4L929,158.6L930,158.6L930,138.6L931,138.6L931,138.0L932,138.0L932,144.5L933,144.5L933,143.9L934,143.9L934,139.3L935,139.3L935,155.8L936,155.8L936,152.9L937,152.9L937,137.8L938,137.8L938,147.1L939,147.1L939,134.8L940,134.8L940,146.7L941,146.7L941,141.5L942,141.5L942,144.0L943,144.0L943,153.4L944,153.4L944,151.2L945,151.2L945,138.3L946,138.3L946,132.5L947,132.5L947,143.7L948,143.7L948,150.0L949,150.0L949,141.6L950,141.6L950,149.7L951,149.7L951,151.4L952,151.4L952,153.3L953,153.3L953,134.8L954,134.8L954,136.3L955,136.3L955,146.3L956,146.3L956,151.2L957,151.2L957,154.4L958,154.4L958,134.5L959,134.5L959,138.9L960,138.9L960,145.1L961,145.1L961,158.2L962,158.2L962,158.0L963,158.0L963,145.1L964,145.1L964,145.4L965,145.4L965,151.8L966,151.8L966,145.8L967,145.8L967,158.7L968,158.7L968,159.3L969,159.3L969,146.8L970,146.8L970,141.9L971,141.9L971,163.9L972,163.9L972,139.4L973,139.4L973,133.1L974,133.1L974,144.0L975,144.0L975,146.8L976,146.8L976,141.7L977,141.7L977,144.6L978,144.6L978,152.1L979,152.1L979,141.8L980,141.8L980,142.2L981,142.2L981,147.6L982,147.6L982,150.5L983,150.5L983,145.8L984,145.8L984,133.0L985,133.0L985,145.1L986,145.1L986,147.7L987,147.7L987,146.7L988,146.7L988,143.8L989,143.8L989,146.4L990,146.4L990,142.5L991,142.5L991,136.4L992,136.4L992,135.2L993,135.2L993,135.1L994,135.1L994,135.0L995,135.0L995,133.0L996,133.0L996,140.4L997,140.4L997,134.3L998,134.3L998,142.3L999,142.3L999,136.4L1000,136.4L1000,142.0L1001,142.0L1001,153.2L1002,153.2L1002,151.6L1003,151.6L1003,143.4L1004,143.4L1004,144.4L1005,144.4L1005,145.9L1006,145.9L1006,134.3L1007,134.3L1007,134.6L1008,134.6L1008,159.8L1009,159.8L1009,138.0L1010,138.0L1010,141.2L1011,141.2L1011,148.5L1012,148.5L1012,157.1L1013,157.1L1013,155.1L1014,155.1L1014,155.0L1015,155.0L1015,149.7L1016,149.7L1016,147.8L1017,147.8L1017,144.5L1018,144.5L1018,142.2L1019,142.2L1019,141.9L1020,141.9L1020,133.3L1021,133.3L1021,135.0L1022,135.0L1022,138.1L1023,138.1L1023,134.9L1024,134.9L1024,138.0L1025,138.0L1025,144.6L1026,144.6L1026,143.4L1027,143.4L1027,156.7L1028,156.7L1028,135.4L1029,135.4L1029,137.3L1030,137.3L1030,132.0L1031,132.0L1031,141.1L1032,141.1L1032,157.7L1033,157.7L1033,137.2L1034,137.2L1034,160.1L1035,160.1L1035,146.6L1036,146.6L1036,143.6L1037,143.6L1037,148.5L1038,148.5L1038,133.2L1039,133.2L1039,142.4L1040,142.4L1040,146.4L1041,146.4L1041,146.0L1042,146.0L1042,141.0L1043,141.0L1043,147.6L1044,147.6L1044,142.7L1045,142.7L1045,145.4L1046,145.4L1046,141.2L1047,141.2L1047,131.9L1048,131.9L1048,134.8L1049,134.8L1049,139.4L1050,139.4L1050,147.5L1051,147.5L1051,139.7L1052,139.7L1052,141.5L1053,141.5L1053,161.1L1054,161.1L1054,147.8L1055,147.8L1055,154.8L1056,154.8L1056,158.7L1057,158.7L1057,151.1L1058,151.1L1058,135.3L1059,135.3L1059,145.0L1060,145.0L1060,155.1L1061,155.1L1061,156.3L1062,156.3L1062,156.6L1063,156.6L1063,149.1L1064,149.1L1064,141.9L1065,141.9L1065,150.0L1066,150.0L1066,140.9L1067,140.9L1067,132.8L1068,132.8L1068,132.4L1069,132.4L1069,153.1L1070,153.1L1070,297.6L1069,297.6L1069,295.6L1068,295.6L1068,299.9L1067,299.9L1067,308.7L1066,308.7L1066,306.7L1065,306.7L1065,306.1L1064,306.1L1064,303.5L1063,303.5L1063,303.3L1062,303.3L1062,297.6L1061,297.6L1061,303.1L1060,303.1L1060,297.9L1059,297.9L1059,300.3L1058,300.3L1058,297.0L1057,297.0L1057,302.0L1056,302.0L1056,332.7L1055,332.7L1055,304.9L1054,304.9L1054,298.3L1053,298.3L1053,303.3L1052,303.3L1052,317.1L1051,317.1L1051,308.3L1050,308.3L1050,318.1L1049,318.1L1049,316.3L1048,316.3L1048,315.1L1047,315.1L1047,320.6L1046,320.6L1046,315.0L1045,315.0L1045,313.4L1044,313.4L1044,309.3L1043,309.3L1043,302.1L1042,302.1L1042,337.5L1041,337.5L1041,316.1L1040,316.1L1040,326.2L1039,326.2L1039,318.6L1038,318.6L1038,317.3L1037,317.3L1037,318.6L1036,318.6L1036,320.7L1035,320.7L1035,314.9L1034,314.9L1034,320.7L1033,320.7L1033,300.3L1032,300.3L1032,301.5L1031,301.5L1031,301.4L1030,301.4L1030,309.4L1029,309.4L1029,316.4L1028,316.4L1028,315.7L1027,315.7L1027,318.3L1026,318.3L1026,314.9L1025,314.9L1025,307.5L1024,307.5L1024,318.0L1023,318.0L1023,311.1L1022,311.1L1022,309.7L1021,309.7L1021,301.7L1020,301.7L1020,300.5L1019,300.5L1019,302.8L1018,302.8L1018,309.2L1017,309.2L1017,305.4L1016,305.4L1016,317.7L1015,317.7L1015,305.9L1014,305.9L1014,299.5L1013,299.5L1013,299.8L1012,299.8L1012,308.0L1011,308.0L1011,319.6L1010,319.6L1010,319.3L1009,319.3L1009,319.4L1008,319.4L1008,316.2L1007,316.2L1007,312.5L1006,312.5L1006,316.5L1005,316.5L1005,309.8L1004,309.8L1004,313.8L1003,313.8L1003,312.2L1002,312.2L1002,309.4L1001,309.4L1001,311.3L1000,311.3L1000,318.3L999,318.3L999,312.8L998,312.8L998,316.4L997,316.4L997,321.0L996,321.0L996,320.0L995,320.0L995,318.9L994,318.9L994,316.0L993,316.0L993,304.0L992,304.0L992,306.8L991,306.8L991,308.6L990,308.6L990,299.8L989,299.8L989,330.4L988,330.4L988,298.5L987,298.5L987,297.6L986,297.6L986,296.7L985,296.7L985,344.6L984,344.6L984,300.1L983,300.1L983,301.7L982,301.7L982,301.2L981,301.2L981,303.0L980,303.0L980,304.9L979,304.9L979,304.5L978,304.5L978,300.2L977,300.2L977,316.6L976,316.6L976,313.1L975,313.1L975,319.8L974,319.8L974,314.9L973,314.9L973,320.0L972,320.0L972,311.2L971,311.2L971,311.6L970,311.6L970,306.2L969,306.2L969,299.8L968,299.8L968,305.0L967,305.0L967,303.5L966,303.5L966,304.4L965,304.4L965,310.4L964,310.4L964,318.1L963,318.1L963,313.1L962,313.1L962,315.5L961,315.5L961,321.5L960,321.5L960,312.0L959,312.0L959,308.8L958,308.8L958,297.8L957,297.8L957,307.0L956,307.0L956,298.5L955,298.5L955,313.7L954,313.7L954,307.3L953,307.3L953,297.1L952,297.1L952,314.0L951,314.0L951,305.7L950,305.7L950,303.1L949,303.1L949,310.4L948,310.4L948,309.3L947,309.3L947,340.3L946,340.3L946,303.2L945,303.2L945,312.4L944,312.4L944,306.1L943,306.1L943,298.4L942,298.4L942,299.0L941,299.0L941,315.5L940,315.5L940,306.4L939,306.4L939,312.6L938,312.6L938,314.8L937,314.8L937,305.6L936,305.6L936,297.5L935,297.5L935,298.9L934,298.9L934,309.9L933,309.9L933,306.5L932,306.5L932,310.8L931,310.8L931,305.4L930,305.4L930,304.3L929,304.3L929,301.2L928,301.2L928,310.1L927,310.1L927,309.0L926,309.0L926,302.9L925,302.9L925,313.4L924,313.4L924,302.7L923,302.7L923,303.8L922,303.8L922,302.3L921,302.3L921,304.5L920,304.5L920,315.2L919,315.2L919,317.0L918,317.0L918,343.0L917,343.0L917,312.5L916,312.5L916,316.7L915,316.7L915,319.4L914,319.4L914,320.6L913,320.6L913,311.8L912,311.8L912,313.6L911,313.6L911,311.3L910,311.3L910,310.2L909,310.2L909,312.9L908,312.9L908,306.4L907,306.4L907,305.4L906,305.4L906,305.6L905,305.6L905,304.7L904,304.7L904,316.8L903,316.8L903,321.3L902,321.3L902,320.8L901,320.8L901,321.1L900,321.1L900,314.1L899,314.1L899,303.2L898,303.2L898,314.8L897,314.8L897,301.2L896,301.2L896,303.7L895,303.7L895,320.1L894,320.1L894,319.9L893,319.9L893,317.4L892,317.4L892,309.7L891,309.7L891,305.0L890,305.0L890,316.4L889,316.4L889,319.4L888,319.4L888,314.7L887,314.7L887,306.2L886,306.2L886,315.9L885,315.9L885,315.2L884,315.2L884,320.6L883,320.6L883,313.2L882,313.2L882,306.4L881,306.4L881,312.2L880,312.2L880,307.1L879,307.1L879,313.7L878,313.7L878,304.5L877,304.5L877,301.9L876,301.9L876,299.9L875,299.9L875,313.2L874,313.2L874,302.3L873,302.3L873,308.0L872,308.0L872,303.2L871,303.2L871,303.4L870,303.4L870,301.0L869,301.0L869,307.5L868,307.5L868,308.0L867,308.0L867,303.0L866,303.0L866,299.2L865,299.2L865,305.1L864,305.1L864,298.6L863,298.6L863,301.4L862,301.4L862,310.6L861,310.6L861,303.1L860,303.1L860,301.0L859,301.0L859,303.9L858,303.9L858,312.2L857,312.2L857,311.6L856,311.6L856,308.4L855,308.4L855,315.9L854,315.9L854,320.0L853,320.0L853,312.8L852,312.8L852,305.8L851,305.8L851,306.7L850,306.7L850,311.6L849,311.6L849,317.2L848,317.2L848,316.0L847,316.0L847,308.7L846,308.7L846,303.2L845,303.2L845,312.8L844,312.8L844,307.5L843,307.5L843,343.5L842,343.5L842,343.6L841,343.6L841,310.7L840,310.7L840,335.3L839,335.3L839,307.0L838,307.0L838,303.6L837,303.6L837,310.4L836,310.4L836,312.9L835,312.9L835,317.3L834,317.3L834,318.9L833,318.9L833,319.7L832,319.7L832,319.9L831,319.9L831,322.2L830,322.2L830,317.9L829,317.9L829,298.6L828,298.6L828,313.4L827,313.4L827,307.6L826,307.6L826,307.1L825,307.1L825,304.5L824,304.5L824,312.0L823,312.0L823,319.3L822,319.3L822,322.4L821,322.4L821,322.8L820,322.8L820,322.6L819,322.6L819,322.3L818,322.3L818,320.2L817,320.2L817,308.5L816,308.5L816,318.2L815,318.2L815,313.7L814,313.7L814,309.6L813,309.6L813,318.2L812,318.2L812,318.8L811,318.8L811,318.4L810,318.4L810,319.2L809,319.2L809,316.2L808,316.2L808,320.0L807,320.0L807,312.2L806,312.2L806,299.7L805,299.7L805,306.9L804,306.9L804,309.4L803,309.4L803,305.2L802,305.2L802,302.3L801,302.3L801,302.7L800,302.7L800,303.2L799,303.2L799,312.4L798,312.4L798,308.0L797,308.0L797,303.9L796,303.9L796,311.7L795,311.7L795,321.5L794,321.5L794,322.1L793,322.1L793,321.8L792,321.8L792,318.3L791,318.3L791,315.9L790,315.9L790,312.2L789,312.2L789,322.4L788,322.4L788,322.2L787,322.2L787,318.2L786,318.2L786,319.1L785,319.1L785,319.8L784,319.8L784,303.5L783,303.5L783,308.0L782,308.0L782,309.1L781,309.1L781,311.0L780,311.0L780,313.2L779,313.2L779,308.8L778,308.8L778,308.2L777,308.2L777,306.7L776,306.7L776,313.1L775,313.1L775,309.2L774,309.2L774,309.6L773,309.6L773,303.2L772,303.2L772,296.6L771,296.6L771,296.4L770,296.4L770,297.8L769,297.8L769,297.7L768,297.7L768,296.3L767,296.3L767,305.4L766,305.4L766,302.5L765,302.5L765,298.2L764,298.2L764,295.3L763,295.3L763,296.4L762,296.4L762,299.9L761,299.9L761,311.4L760,311.4L760,308.3L759,308.3L759,311.4L758,311.4L758,310.8L757,310.8L757,321.4L756,321.4L756,317.0L755,317.0L755,311.6L754,311.6L754,313.7L753,313.7L753,313.3L752,313.3L752,315.3L751,315.3L751,321.5L750,321.5L750,302.7L749,302.7L749,298.4L748,298.4L748,297.8L747,297.8L747,335.1L746,335.1L746,297.3L745,297.3L745,306.5L744,306.5L744,320.7L743,320.7L743,318.2L742,318.2L742,321.3L741,321.3L741,316.8L740,316.8L740,300.4L739,300.4L739,301.1L738,301.1L738,305.1L737,305.1L737,305.0L736,305.0L736,299.8L735,299.8L735,295.6L734,295.6L734,327.9L733,327.9L733,342.4L732,342.4L732,313.2L731,313.2L731,313.9L730,313.9L730,313.6L729,313.6L729,308.9L728,308.9L728,306.4L727,306.4L727,301.6L726,301.6L726,298.5L725,298.5L725,316.7L724,316.7L724,309.0L723,309.0L723,315.8L722,315.8L722,301.0L721,301.0L721,307.7L720,307.7L720,304.4L719,304.4L719,305.4L718,305.4L718,312.2L717,312.2L717,320.7L716,320.7L716,321.0L715,321.0L715,321.8L714,321.8L714,305.3L713,305.3L713,303.3L712,303.3L712,302.3L711,302.3L711,304.0L710,304.0L710,310.3L709,310.3L709,317.5L708,317.5L708,319.9L707,319.9L707,319.0L706,319.0L706,314.7L705,314.7L705,317.8L704,317.8L704,313.2L703,313.2L703,312.9L702,312.9L702,313.1L701,313.1L701,306.8L700,306.8L700,339.8L699,339.8L699,311.6L698,311.6L698,320.3L697,320.3L697,334.4L696,334.4L696,312.2L695,312.2L695,306.3L694,306.3L694,302.0L693,302.0L693,297.8L692,297.8L692,301.6L691,301.6L691,306.0L690,306.0L690,297.2L689,297.2L689,297.9L688,297.9L688,332.3L687,332.3L687,317.0L686,317.0L686,319.6L685,319.6L685,317.8L684,317.8L684,305.8L683,305.8L683,316.8L682,316.8L682,318.1L681,318.1L681,343.7L680,343.7L680,303.2L679,303.2L679,299.1L678,299.1L678,299.5L677,299.5L677,302.6L676,302.6L676,313.1L675,313.1L675,318.2L674,318.2L674,317.3L673,317.3L673,304.1L672,304.1L672,297.8L671,297.8L671,297.1L670,297.1L670,302.5L669,302.5L669,340.3L668,340.3L668,295.9L667,295.9L667,298.8L666,298.8L666,300.5L665,300.5L665,312.1L664,312.1L664,300.9L663,300.9L663,300.0L662,300.0L662,301.7L661,301.7L661,318.3L660,318.3L660,316.7L659,316.7L659,316.0L658,316.0L658,299.5L657,299.5L657,314.9L656,314.9L656,308.3L655,308.3L655,300.7L654,300.7L654,308.8L653,308.8L653,308.6L652,308.6L652,299.8L651,299.8L651,301.6L650,301.6L650,297.1L649,297.1L649,330.2L648,330.2L648,311.0L647,311.0L647,300.0L646,300.0L646,305.6L645,305.6L645,297.0L644,297.0L644,304.5L643,304.5L643,308.1L642,308.1L642,316.0L641,316.0L641,320.6L640,320.6L640,311.5L639,311.5L639,299.5L638,299.5L638,300.2L637,300.2L637,315.1L636,315.1L636,321.1L635,321.1L635,320.7L634,320.7L634,304.1L633,304.1L633,305.1L632,305.1L632,312.4L631,312.4L631,319.5L630,319.5L630,338.8L629,338.8L629,298.3L628,298.3L628,303.5L627,303.5L627,309.4L626,309.4L626,317.7L625,317.7L625,311.4L624,311.4L624,320.6L623,320.6L623,316.7L622,316.7L622,308.9L621,308.9L621,302.0L620,302.0L620,314.5L619,314.5L619,305.9L618,305.9L618,315.0L617,315.0L617,317.8L616,317.8L616,321.8L615,321.8L615,319.5L614,319.5L614,317.3L613,317.3L613,305.0L612,305.0L612,310.3L611,310.3L611,315.5L610,315.5L610,317.3L609,317.3L609,319.7L608,319.7L608,313.2L607,313.2L607,327.7L606,327.7L606,320.4L605,320.4L605,301.7L604,301.7L604,299.0L603,299.0L603,295.5L602,295.5L602,297.2L601,297.2L601,298.4L600,298.4L600,301.3L599,301.3L599,301.2L598,301.2L598,298.4L597,298.4L597,330.2L596,330.2L596,317.5L595,317.5L595,317.1L594,317.1L594,303.0L593,303.0L593,307.0L592,307.0L592,306.5L591,306.5L591,314.3L590,314.3L590,318.3L589,318.3L589,320.6L588,320.6L588,322.3L587,322.3L587,322.6L586,322.6L586,322.3L585,322.3L585,321.4L584,321.4L584,315.8L583,315.8L583,318.6L582,318.6L582,308.2L581,308.2L581,305.9L580,305.9L580,302.8L579,302.8L579,305.2L578,305.2L578,329.9L577,329.9L577,304.7L576,304.7L576,306.8L575,306.8L575,307.2L574,307.2L574,336.5L573,336.5L573,298.8L572,298.8L572,313.6L571,313.6L571,315.3L570,315.3L570,329.9L569,329.9L569,312.9L568,312.9L568,303.4L567,303.4L567,315.0L566,315.0L566,313.1L565,313.1L565,314.1L564,314.1L564,311.4L563,311.4L563,307.2L562,307.2L562,296.7L561,296.7L561,301.9L560,301.9L560,315.0L559,315.0L559,306.9L558,306.9L558,311.4L557,311.4L557,300.9L556,300.9L556,299.9L555,299.9L555,298.2L554,298.2L554,298.2L553,298.2L553,306.4L552,306.4L552,298.0L551,298.0L551,298.4L550,298.4L550,297.5L549,297.5L549,311.3L548,311.3L548,308.4L547,308.4L547,304.7L546,304.7L546,301.1L545,301.1L545,301.3L544,301.3L544,298.0L543,298.0L543,299.2L542,299.2L542,298.9L541,298.9L541,298.8L540,298.8L540,297.1L539,297.1L539,299.1L538,299.1L538,298.1L537,298.1L537,299.3L536,299.3L536,303.4L535,303.4L535,309.0L534,309.0L534,297.7L533,297.7L533,303.2L532,303.2L532,311.5L531,311.5L531,319.2L530,319.2L530,314.2L529,314.2L529,316.8L528,316.8L528,314.6L527,314.6L527,315.0L526,315.0L526,309.0L525,309.0L525,318.2L524,318.2L524,314.4L523,314.4L523,313.1L522,313.1L522,298.5L521,298.5L521,304.0L520,304.0L520,315.3L519,315.3L519,303.7L518,303.7L518,305.1L517,305.1L517,297.3L516,297.3L516,296.1L515,296.1L515,297.1L514,297.1L514,297.5L513,297.5L513,295.7L512,295.7L512,303.2L511,303.2L511,300.4L510,300.4L510,303.2L509,303.2L509,310.7L508,310.7L508,305.6L507,305.6L507,313.0L506,313.0L506,310.7L505,310.7L505,304.1L504,304.1L504,315.0L503,315.0L503,305.9L502,305.9L502,301.3L501,301.3L501,299.9L500,299.9L500,313.4L499,313.4L499,305.3L498,305.3L498,312.7L497,312.7L497,297.5L496,297.5L496,298.8L495,298.8L495,305.8L494,305.8L494,307.3L493,307.3L493,308.3L492,308.3L492,305.1L491,305.1L491,303.7L490,303.7L490,314.6L489,314.6L489,296.0L488,296.0L488,296.5L487,296.5L487,303.8L486,303.8L486,312.6L485,312.6L485,311.8L484,311.8L484,298.7L483,298.7L483,302.0L482,302.0L482,308.5L481,308.5L481,309.4L480,309.4L480,304.7L479,304.7L479,297.2L478,297.2L478,296.8L477,296.8L477,300.9L476,300.9L476,306.6L475,306.6L475,302.2L474,302.2L474,313.2L473,313.2L473,314.8L472,314.8L472,297.8L471,297.8L471,296.7L470,296.7L470,303.5L469,303.5L469,300.1L468,300.1L468,307.0L467,307.0L467,304.3L466,304.3L466,308.1L465,308.1L465,307.3L464,307.3L464,310.8L463,310.8L463,304.9L462,304.9L462,301.9L461,301.9L461,300.8L460,300.8L460,303.5L459,303.5L459,296.5L458,296.5L458,301.8L457,301.8L457,301.1L456,301.1L456,315.1L455,315.1L455,301.4L454,301.4L454,296.4L453,296.4L453,300.4L452,300.4L452,296.1L451,296.1L451,298.7L450,298.7L450,301.8L449,301.8L449,310.3L448,310.3L448,321.5L447,321.5L447,317.2L446,317.2L446,310.8L445,310.8L445,320.6L444,320.6L444,316.2L443,316.2L443,315.5L442,315.5L442,330.4L441,330.4L441,312.8L440,312.8L440,313.1L439,313.1L439,311.6L438,311.6L438,307.4L437,307.4L437,314.4L436,314.4L436,320.1L435,320.1L435,322.0L434,322.0L434,314.0L433,314.0L433,317.8L432,317.8L432,321.2L431,321.2L431,318.7L430,318.7L430,312.8L429,312.8L429,321.4L428,321.4L428,319.3L427,319.3L427,319.4L426,319.4L426,307.8L425,307.8L425,317.2L424,317.2L424,301.8L423,301.8L423,331.5L422,331.5L422,311.3L421,311.3L421,304.7L420,304.7L420,317.4L419,317.4L419,310.8L418,310.8L418,316.2L417,316.2L417,312.4L416,312.4L416,316.0L415,316.0L415,319.0L414,319.0L414,308.5L413,308.5L413,344.0L412,344.0L412,308.9L411,308.9L411,302.2L410,302.2L410,304.2L409,304.2L409,309.1L408,309.1L408,303.3L407,303.3L407,338.4L406,338.4L406,304.0L405,304.0L405,302.8L404,302.8L404,304.7L403,304.7L403,300.6L402,300.6L402,304.0L401,304.0L401,319.5L400,319.5L400,318.9L399,318.9L399,314.2L398,314.2L398,321.6L397,321.6L397,309.3L396,309.3L396,304.6L395,304.6L395,299.9L394,299.9L394,307.6L393,307.6L393,342.2L392,342.2L392,321.1L391,321.1L391,319.7L390,319.7L390,329.6L389,329.6L389,315.3L388,315.3L388,321.1L387,321.1L387,315.7L386,315.7L386,315.8L385,315.8L385,321.1L384,321.1L384,320.3L383,320.3L383,339.1L382,339.1L382,312.7L381,312.7L381,307.0L380,307.0L380,311.9L379,311.9L379,304.2L378,304.2L378,317.4L377,317.4L377,320.1L376,320.1L376,318.4L375,318.4L375,314.3L374,314.3L374,318.4L373,318.4L373,320.2L372,320.2L372,322.5L371,322.5L371,321.6L370,321.6L370,315.2L369,315.2L369,306.0L368,306.0L368,319.0L367,319.0L367,310.3L366,310.3L366,306.2L365,306.2L365,296.2L364,296.2L364,300.9L363,300.9L363,341.8L362,341.8L362,300.6L361,300.6L361,298.1L360,298.1L360,303.8L359,303.8L359,305.3L358,305.3L358,319.7L357,319.7L357,319.4L356,319.4L356,316.4L355,316.4L355,321.4L354,321.4L354,320.9L353,320.9L353,317.2L352,317.2L352,312.3L351,312.3L351,310.6L350,310.6L350,298.5L349,298.5L349,295.8L348,295.8L348,303.9L347,303.9L347,312.9L346,312.9L346,330.1L345,330.1L345,300.1L344,300.1L344,343.3L343,343.3L343,298.0L342,298.0L342,300.0L341,300.0L341,301.5L340,301.5L340,305.1L339,305.1L339,298.5L338,298.5L338,300.7L337,300.7L337,301.4L336,301.4L336,302.3L335,302.3L335,316.6L334,316.6L334,317.5L333,317.5L333,316.5L332,316.5L332,311.6L331,311.6L331,298.8L330,298.8L330,298.2L329,298.2L329,298.9L328,298.9L328,299.3L327,299.3L327,305.4L326,305.4L326,296.9L325,296.9L325,300.4L324,300.4L324,296.6L323,296.6L323,303.5L322,303.5L322,304.3L321,304.3L321,298.9L320,298.9L320,298.9L319,298.9L319,299.6L318,299.6L318,309.9L317,309.9L317,317.1L316,317.1L316,312.6L315,312.6L315,303.1L314,303.1L314,316.0L313,316.0L313,307.6L312,307.6L312,298.5L311,298.5L311,299.4L310,299.4L310,300.6L309,300.6L309,307.5L308,307.5L308,312.0L307,312.0L307,301.1L306,301.1L306,312.9L305,312.9L305,313.3L304,313.3L304,317.6L303,317.6L303,318.3L302,318.3L302,318.5L301,318.5L301,310.2L300,310.2L300,304.9L299,304.9L299,315.5L298,315.5L298,319.4L297,319.4L297,322.2L296,322.2L296,320.8L295,320.8L295,321.7L294,321.7L294,322.2L293,322.2L293,321.6L292,321.6L292,315.2L291,315.2L291,319.8L290,319.8L290,311.8L289,311.8L289,329.3L288,329.3L288,308.1L287,308.1L287,308.7L286,308.7L286,315.7L285,315.7L285,309.2L284,309.2L284,309.2L283,309.2L283,303.3L282,303.3L282,298.2L281,298.2L281,309.5L280,309.5L280,316.5L279,316.5L279,312.3L278,312.3L278,310.5L277,310.5L277,316.9L276,316.9L276,315.9L275,315.9L275,311.0L274,311.0L274,302.5L273,302.5L273,314.3L272,314.3L272,315.3L271,315.3L271,307.7L270,307.7L270,301.0L269,301.0L269,312.4L268,312.4L268,320.8L267,320.8L267,316.0L266,316.0L266,307.4L265,307.4L265,299.1L264,299.1L264,298.4L263,298.4L263,305.4L262,305.4L262,302.9L261,302.9L261,302.9L260,302.9L260,318.2L259,318.2L259,312.7L258,312.7L258,313.6L257,313.6L257,299.7L256,299.7L256,310.5L255,310.5L255,318.6L254,318.6L254,315.2L253,315.2L253,310.1L252,310.1L252,308.0L251,308.0L251,309.3L250,309.3L250,307.1L249,307.1L249,309.5L248,309.5L248,305.5L247,305.5L247,298.5L246,298.5L246,299.3L245,299.3L245,299.8L244,299.8L244,300.7L243,300.7L243,314.8L242,314.8L242,321.0L241,321.0L241,321.1L240,321.1L240,317.8L239,317.8L239,313.9L238,313.9L238,303.2L237,303.2L237,313.5L236,313.5L236,319.1L235,319.1L235,318.7L234,318.7L234,321.8L233,321.8L233,313.5L232,313.5L232,317.6L231,317.6L231,305.1L230,305.1L230,316.1L229,316.1L229,307.7L228,307.7L228,301.5L227,301.5L227,344.8L226,344.8L226,307.5L225,307.5L225,306.1L224,306.1L224,296.5L223,296.5L223,311.8L222,311.8L222,310.8L221,310.8L221,311.9L220,311.9L220,305.1L219,305.1L219,309.8L218,309.8L218,306.8L217,306.8L217,309.8L216,309.8L216,306.6L215,306.6L215,307.1L214,307.1L214,314.5L213,314.5L213,302.3L212,302.3L212,308.7L211,308.7L211,300.8L210,300.8L210,314.2L209,314.2L209,315.0L208,315.0L208,306.2L207,306.2L207,317.7L206,317.7L206,314.6L205,314.6L205,319.4L204,319.4L204,315.5L203,315.5L203,312.0L202,312.0L202,319.2L201,319.2L201,309.8L200,309.8L200,314.4L199,314.4L199,316.4L198,316.4L198,312.4L197,312.4L197,302.6L196,302.6L196,303.6L195,303.6L195,308.5L194,308.5L194,307.7L193,307.7L193,303.6L192,303.6L192,298.2L191,298.2L191,297.6L190,297.6L190,296.8L189,296.8L189,298.8L188,298.8L188,304.1L187,304.1L187,318.4L186,318.4L186,313.8L185,313.8L185,314.8L184,314.8L184,315.9L183,315.9L183,315.4L182,315.4L182,343.3L181,343.3L181,322.1L180,322.1L180,318.8L179,318.8L179,317.3L178,317.3L178,301.3L177,301.3L177,318.2L176,318.2L176,315.1L175,315.1L175,302.0L174,302.0L174,312.3L173,312.3L173,307.5L172,307.5L172,296.8L171,296.8L171,299.9L170,299.9L170,340.8L169,340.8L169,308.4L168,308.4L168,314.3L167,314.3L167,316.7L166,316.7L166,335.0L165,335.0L165,318.5L164,318.5L164,322.1L163,322.1L163,321.5L162,321.5L162,317.3L161,317.3L161,319.5L160,319.5L160,321.6L159,321.6L159,321.6L158,321.6L158,316.7L157,316.7L157,305.4L156,305.4L156,300.1L155,300.1L155,298.9L154,298.9L154,299.9L153,299.9L153,295.6L152,295.6L152,329.1L151,329.1L151,297.9L150,297.9L150,297.4L149,297.4L149,295.3L148,295.3L148,295.4L147,295.4L147,297.5L146,297.5L146,301.5L145,301.5L145,310.1L144,310.1L144,320.3L143,320.3L143,306.2L142,306.2L142,302.8L141,302.8L141,306.1L140,306.1L140,298.5L139,298.5L139,300.0L138,300.0L138,297.1L137,297.1L137,311.9L136,311.9L136,314.7L135,314.7L135,309.3L134,309.3L134,310.2L133,310.2L133,312.5L132,312.5L132,313.2L131,313.2L131,317.1L130,317.1L130,328.1L129,328.1L129,301.4L128,301.4L128,299.1L127,299.1L127,304.3L126,304.3L126,299.2L125,299.2L125,297.8L124,297.8L124,299.1L123,299.1L123,337.3L122,337.3L122,298.0L121,298.0L121,308.7L120,308.7L120,316.4L119,316.4L119,303.9L118,303.9L118,311.4L117,311.4L117,309.3L116,309.3L116,309.0L115,309.0L115,303.2L114,303.2L114,299.7L113,299.7L113,304.9L112,304.9L112,303.2L111,303.2L111,313.4L110,313.4L110,316.2L109,316.2L109,318.9L108,318.9L108,304.1L107,304.1L107,318.8L106,318.8L106,320.4L105,320.4L105,321.0L104,321.0L104,312.2L103,312.2L103,304.2L102,304.2L102,304.9L101,304.9L101,309.6L100,309.6L100,306.8L99,306.8L99,306.2L98,306.2L98,319.8L97,319.8L97,315.1L96,315.1L96,314.0L95,314.0L95,318.4L94,318.4L94,318.8L93,318.8L93,321.2L92,321.2L92,320.0L91,320.0L91,320.5L90,320.5L90,314.3L89,314.3L89,312.7L88,312.7L88,319.8L87,319.8L87,321.4L86,321.4L86,320.6L85,320.6L85,308.0L84,308.0L84,307.1L83,307.1L83,313.9L82,313.9L82,299.5L81,299.5L81,302.0L80,302.0L80,305.1L79,305.1L79,307.0L78,307.0L78,316.3L77,316.3L77,318.8L76,318.8L76,310.1L75,310.1L75,304.9L74,304.9L74,310.5L73,310.5L73,321.3L72,321.3L72,320.4L71,320.4L71,320.4L70,320.4L70,318.2L69,318.2L69,318.1L68,318.1L68,321.0L67,321.0L67,314.9L66,314.9L66,300.2L65,300.2L65,302.8L64,302.8L64,308.8L63,308.8L63,313.3L62,313.3L62,320.0L61,320.0L61,315.9L60,315.9L60,317.4L59,317.4L59,316.5L58,316.5L58,313.0L57,313.0L57,315.1L56,315.1L56,307.5L55,307.5L55,308.8L54,308.8L54,310.2L53,310.2L53,304.2L52,304.2L52,298.0L51,298.0L51,296.1L50,296.1L50,300.9L49,300.9L49,303.5L48,303.5L48,309.9L47,309.9L47,308.8L46,308.8L46,302.0L45,302.0L45,298.5L44,298.5L44,296.1L43,296.1L43,295.6L42,295.6L42,295.5L41,295.5L41,297.1L40,297.1L40,304.4L39,304.4L39,310.3L38,310.3L38,306.9L37,306.9L37,309.7L36,309.7L36,310.3L35,310.3L35,308.2L34,308.2L34,315.1L33,315.1L33,302.8L32,302.8L32,326.9L31,326.9L31,315.3L30,315.3L30,303.2L29,303.2L29,308.7L28,308.7L28,305.5L27,305.5L27,312.7L26,312.7L26,320.2L25,320.2Z" fill="#ff3000"/>
<path d="M29.5,301.2V348.7M34.5,306.2V332.9M41.5,296.1V295.5M42.5,293.6V330.8M47.5,131.4V148.6M48.5,301.5V348.2M49.5,298.9V347.8M50.5,301.3V296.1M56.5,313.1V325.6M70.5,298.8V320.4M73.5,292.4V310.5M74.5,295.1V304.9M76.5,300.3V318.8M77.5,133.1V136.6M77.5,294.4V316.3M83.5,130.1V155.1M90.5,318.5V330.4M93.5,135.8V133.8M94.5,316.4V336.2M95.5,134.4V152.0M103.5,129.8V153.8M104.5,124.8V152.4M113.5,297.7V341.2M116.5,126.6V138.0M117.5,309.4V336.9M118.5,124.8V135.9M121.5,294.4V298.0M126.5,302.3V339.5M131.5,295.4V313.2M132.5,293.8V312.5M135.5,293.7V314.7M137.5,125.2V162.6M137.5,293.5V297.1M139.5,297.6V298.5M145.5,300.7V301.5M150.5,125.7V153.6M157.5,314.7V340.2M158.5,301.3V321.6M159.5,128.3V160.5M166.5,314.7V322.8M171.5,294.8V340.7M180.5,293.1V322.1M182.5,122.8V146.0M183.5,120.7V133.4M184.5,312.8V322.6M189.5,294.8V323.3M190.5,295.6V342.0M197.5,310.4V343.6M205.5,312.6V333.1M211.5,119.6V159.6M212.5,300.3V340.4M217.5,304.8V343.9M218.5,297.9V309.8M221.5,308.8V341.7M223.5,131.1V135.8M223.5,298.8V296.5M224.5,129.8V133.8M229.5,126.7V147.8M231.5,122.3V147.9M234.5,124.7V157.5M234.5,300.6V318.7M240.5,132.7V143.5M247.5,303.5V336.1M248.5,118.8V156.9M249.5,305.1V339.4M250.5,307.3V331.7M252.5,127.0V151.6M253.5,313.2V340.8M256.5,133.6V137.1M256.5,297.7V336.4M259.5,301.4V318.2M261.5,300.9V333.4M262.5,127.6V151.4M263.5,120.9V150.3M265.5,305.4V349.3M279.5,129.0V140.3M280.5,307.5V336.2M280.5,293.1V309.5M284.5,307.2V345.9M289.5,127.1V137.7M293.5,320.2V346.2M296.5,295.9V322.2M302.5,316.3V330.6M304.5,311.3V329.5M309.5,300.3V300.6M316.5,315.1V334.0M324.5,298.3V300.4M325.5,124.9V148.6M328.5,296.9V344.6M328.5,297.0V298.9M337.5,120.1V156.4M337.5,298.7V347.0M339.5,119.5V148.1M340.5,118.1V146.9M342.5,127.3V154.3M345.5,300.3V330.1M346.5,133.8V140.2M350.5,308.6V343.0M350.5,296.7V310.6M354.5,292.9V321.4M355.5,117.0V145.3M357.5,131.1V158.5M357.5,317.7V350.2M359.5,301.8V346.7M363.5,298.9V350.3M366.5,308.3V324.2M369.5,313.2V341.7M374.5,120.6V158.5M379.5,120.2V160.5M384.5,116.3V135.8M386.5,122.1V145.7M387.5,134.6V140.8M397.5,296.4V321.6M398.5,312.2V325.4M399.5,316.9V324.0M400.5,317.5V328.4M406.5,336.4V335.6M410.5,300.2V334.7M416.5,310.4V339.6M419.5,120.7V142.8M421.5,301.1V311.3M433.5,312.0V325.9M440.5,310.8V322.1M444.5,318.6V340.1M446.5,315.2V326.5M449.5,129.3V143.7M450.5,128.7V146.5M451.5,294.1V343.0M455.5,298.1V315.1M457.5,299.8V336.7M462.5,301.8V304.9M465.5,306.1V330.4M466.5,119.3V133.3M468.5,298.1V329.5M471.5,132.3V145.0M474.5,299.6V302.2M483.5,133.4V147.6M485.5,122.5V133.4M485.5,310.6V345.1M489.5,127.7V136.5M500.5,126.0V141.5M507.5,303.6V349.4M511.5,301.2V327.6M514.5,130.0V133.1M516.5,295.3V346.6M521.5,295.2V298.5M526.5,293.9V315.0M527.5,294.6V314.6M530.5,317.2V347.3M531.5,117.1V144.1M531.5,299.1V311.5M536.5,296.4V299.3M540.5,296.8V345.1M548.5,309.3V330.0M554.5,301.9V298.2M556.5,125.6V154.1M556.5,298.9V346.7M562.5,305.2V348.5M575.5,117.0V155.7M576.5,124.3V149.5M579.5,300.8V346.1M585.5,320.3V323.7M589.5,316.3V324.4M592.5,293.2V307.0M593.5,297.1V303.0M603.5,130.3V144.1M607.5,311.2V333.0M619.5,312.5V332.5M619.5,301.6V314.5M626.5,307.4V348.2M627.5,301.5V333.3M634.5,300.0V320.7M639.5,117.9V149.2M639.5,309.5V332.7M643.5,135.1V139.6M659.5,295.4V316.7M663.5,298.9V348.8M673.5,315.3V345.2M680.5,341.7V344.3M684.5,294.5V317.8M685.5,125.8V134.1M687.5,129.9V154.5M689.5,135.0V153.5M693.5,298.3V302.0M703.5,125.0V145.0M707.5,134.5V158.3M707.5,317.9V330.7M708.5,315.5V326.4M711.5,134.9V147.7M712.5,129.9V153.0M715.5,319.0V336.8M719.5,133.3V139.0M731.5,296.4V313.2M732.5,340.4V349.9M735.5,297.8V342.6M749.5,292.9V302.7M751.5,313.3V333.1M761.5,131.8V160.6M761.5,297.9V340.8M767.5,294.3V331.6M770.5,300.7V296.4M776.5,304.7V330.2M777.5,306.2V332.1M778.5,306.8V341.4M791.5,316.3V346.6M803.5,307.4V338.0M804.5,304.9V343.4M809.5,317.2V334.9M812.5,300.8V318.2M814.5,299.7V313.7M815.5,121.2V161.0M822.5,317.3V331.6M823.5,310.0V346.2M824.5,302.5V332.6M828.5,134.5V136.9M828.5,299.0V298.6M831.5,121.5V148.0M831.5,317.9V326.3M832.5,128.5V144.4M835.5,310.9V346.6M836.5,135.2V154.4M836.5,308.4V344.7M837.5,301.3V303.6M839.5,133.2V143.4M840.5,308.7V342.4M842.5,341.5V326.0M844.5,296.2V312.8M845.5,135.1V155.6M850.5,301.2V306.7M854.5,313.9V343.0M859.5,130.4V137.2M860.5,301.1V347.3M861.5,308.6V347.9M865.5,297.2V345.5M871.5,293.2V303.2M881.5,121.2V163.7M884.5,119.3V152.9M886.5,135.6V153.3M889.5,314.4V350.6M889.5,298.1V316.4M894.5,122.4V152.2M901.5,133.5V151.3M908.5,119.9V142.7M908.5,300.1V312.9M910.5,118.8V149.2M911.5,311.6V322.3M919.5,118.5V151.2M919.5,313.2V338.5M920.5,134.2V157.6M922.5,301.8V325.6M924.5,121.5V158.9M924.5,311.4V337.3M929.5,302.3V322.2M932.5,126.9V146.5M934.5,134.9V141.3M936.5,124.3V154.9M938.5,129.9V149.1M942.5,297.4V298.4M944.5,310.4V324.7M946.5,296.3V340.3M951.5,312.0V343.6M959.5,117.4V140.9M959.5,310.0V334.5M959.5,297.3V312.0M962.5,295.0V313.1M963.5,131.6V147.1M965.5,302.4V346.1M967.5,135.6V160.7M969.5,117.9V148.8M978.5,302.5V342.8M985.5,294.7V336.3M985.5,294.6V296.7M986.5,121.2V149.7M987.5,296.5V346.3M991.5,116.3V138.4M999.5,292.9V318.3M1000.5,131.5V144.0M1008.5,317.4V336.0M1010.5,127.2V143.2M1014.5,303.9V349.8M1018.5,124.3V144.2M1024.5,305.5V347.3M1031.5,128.2V143.1M1031.5,299.5V343.8M1032.5,292.9V300.3M1034.5,127.6V162.1M1035.5,318.7V323.5M1042.5,300.1V325.1M1046.5,318.6V336.7M1050.5,128.6V149.5M1050.5,306.3V346.8M1052.5,301.3V328.3M1056.5,300.0V322.9M1057.5,295.0V335.1M1061.5,295.6V323.8M1062.5,301.3V338.7M1063.5,301.5V341.0M1064.5,133.4V143.9" stroke="#9a3a52" stroke-width="1.7" fill="none"/>
<path d="M25,115.5H1070.5V351.5" stroke="#000a20" stroke-width="1.5" fill="none"/>
<path d="M462.5,351v4M621.5,351v4M780.5,351v4M939.5,351v4" stroke="#111" stroke-width="1"/>
<path d="M1070,138.5h5M1070,168.5h5M1070,197.5h5M1070,227.5h5M1070,257.5h5M1070,287.5h5M1070,316.5h5M1070,346.5h5" stroke="#222" stroke-width="1"/>
</svg>
<div class="a" style="left:878px;top:303px;width:81px;height:23px;background:#fff"></div>
<div class="a" style="left:880px;top:305.5px;font-size:18px;color:#1e1e1e;line-height:21px;white-space:nowrap">Channel2</div>
<div class="lbl" style="left:423px;top:355.5px;width:80px;text-align:center">0.75</div>
<div class="lbl" style="left:487px;top:355.5px;width:80px;text-align:center">t/s</div>
<div class="lbl" style="left:581px;top:355.5px;width:80px;text-align:center">1</div>
<div class="lbl" style="left:741px;top:355.5px;width:80px;text-align:center">1.25</div>
<div class="lbl" style="left:899px;top:355.5px;width:80px;text-align:center">1.5</div>
<div class="a" style="left:25px;top:375px;width:1055px;height:1px;background:#b8b8b8"></div>
<div class="a" style="left:25px;top:376px;width:1055px;height:8px;background:#ededed"></div>
<div class="a" style="left:531px;top:379px;width:46px;height:4px;background:#c4c4c4"></div>
<div class="a" style="left:25px;top:384px;width:1055px;height:1px;background:#fafafa"></div>
<div class="a" style="left:1077px;top:391px;width:3px;height:12px;background:#404858"></div>
<div class="a" style="left:0;top:408px;width:1080px;height:254px;background:#002b6a"></div>
<svg class="a" style="left:0;top:0" width="1080" height="682">
<defs><clipPath id="hc"><rect x="193" y="409" width="830" height="253"/></clipPath></defs>
<path d="M-59.0,661L193.0,409M-48.6,661L203.4,409M-38.2,661L213.8,409M-27.8,661L224.2,409M-17.4,661L234.6,409M-7.0,661L245.0,409M3.4,661L255.4,409M13.8,661L265.8,409M24.2,661L276.2,409M34.6,661L286.6,409M45.0,661L297.0,409M55.4,661L307.4,409M65.8,661L317.8,409M76.2,661L328.2,409M86.6,661L338.6,409M97.0,661L349.0,409M107.4,661L359.4,409M117.8,661L369.8,409M128.2,661L380.2,409M138.6,661L390.6,409M149.0,661L401.0,409M159.4,661L411.4,409M169.8,661L421.8,409M180.2,661L432.2,409M190.6,661L442.6,409M201.0,661L453.0,409M211.4,661L463.4,409M221.8,661L473.8,409M232.2,661L484.2,409M242.6,661L494.6,409M253.0,661L505.0,409M263.4,661L515.4,409M273.8,661L525.8,409M284.2,661L536.2,409M294.6,661L546.6,409M305.0,661L557.0,409M315.4,661L567.4,409M325.8,661L577.8,409M336.2,661L588.2,409M346.6,661L598.6,409M357.0,661L609.0,409M367.4,661L619.4,409M377.8,661L629.8,409M388.2,661L640.2,409M398.6,661L650.6,409M409.0,661L661.0,409M419.4,661L671.4,409M429.8,661L681.8,409M440.2,661L692.2,409M450.6,661L702.6,409M461.0,661L713.0,409M471.4,661L723.4,409M481.8,661L733.8,409M492.2,661L744.2,409M502.6,661L754.6,409M513.0,661L765.0,409M523.4,661L775.4,409M533.8,661L785.8,409M544.2,661L796.2,409M554.6,661L806.6,409M565.0,661L817.0,409M575.4,661L827.4,409M585.8,661L837.8,409M596.2,661L848.2,409M606.6,661L858.6,409M617.0,661L869.0,409M627.4,661L879.4,409M637.8,661L889.8,409M648.2,661L900.2,409M658.6,661L910.6,409M669.0,661L921.0,409M679.4,661L931.4,409M689.8,661L941.8,409M700.2,661L952.2,409M710.6,661L962.6,409M721.0,661L973.0,409M731.4,661L983.4,409M741.8,661L993.8,409M752.2,661L1004.2,409M762.6,661L1014.6,409M773.0,661L1025.0,409M783.4,661L1035.4,409M793.8,661L1045.8,409M804.2,661L1056.2,409M814.6,661L1066.6,409M825.0,661L1077.0,409M835.4,661L1087.4,409M845.8,661L1097.8,409M856.2,661L1108.2,409M866.6,661L1118.6,409M877.0,661L1129.0,409M887.4,661L1139.4,409M897.8,661L1149.8,409M908.2,661L1160.2,409M918.6,661L1170.6,409M929.0,661L1181.0,409M939.4,661L1191.4,409M949.8,661L1201.8,409M960.2,661L1212.2,409M970.6,661L1222.6,409M981.0,661L1233.0,409M991.4,661L1243.4,409M1001.8,661L1253.8,409M1012.2,661L1264.2,409M1022.6,661L1274.6,409M1033.0,661L1285.0,409M1043.4,661L1295.4,409M1053.8,661L1305.8,409M1064.2,661L1316.2,409M1074.6,661L1326.6,409M1085.0,661L1337.0,409M1095.4,661L1347.4,409M1105.8,661L1357.8,409M1116.2,661L1368.2,409M1126.6,661L1378.6,409M1137.0,661L1389.0,409M1147.4,661L1399.4,409M1157.8,661L1409.8,409M1168.2,661L1420.2,409M1178.6,661L1430.6,409M1189.0,661L1441.0,409M1199.4,661L1451.4,409M1209.8,661L1461.8,409M1220.2,661L1472.2,409M1230.6,661L1482.6,409M1241.0,661L1493.0,409M1251.4,661L1503.4,409M1261.8,661L1513.8,409M1272.2,661L1524.2,409" stroke="#4a70c0" stroke-opacity="0.6" stroke-width="1.2" fill="none" clip-path="url(#hc)"/>
<path d="M0,428.5H1080M0,461.5H1080M0,493.5H1080M0,524.5H1080M0,556.5H1080M0,587.5H1080M0,619.5H1080M0,652.5H1080M62.0,409V662M194.0,409V662M294.0,409V662M393.0,409V662M525.0,409V662M625.0,409V662M725.0,409V662M857.0,409V662M956.0,409V662M1056.0,409V662" stroke="#000a22" stroke-width="1.8" fill="none"/>
<path d="M0,408.5H1080M1079.5,409V662" stroke="#0a0f1a" stroke-width="1.2"/>
<path d="M193,486.7H327V488.3H370.5V489H924V482.5H1023.5V411H193" stroke="#c8dcf8" stroke-width="2" fill="none"/>
<path d="M193,511.4H294V498.5H332.4V497.1H374.5V496.4H924V502H1023.5V662" stroke="#c8dcf8" stroke-width="2" fill="none"/>
<path d="M0,504.6H46V501.3H111V509.6H144.2V503.7H179V497H209.5V500.1H244.8V495.5H278.8V491.4H309.4V493.4H342V491H371.5V490.5H440.6V493.3H508.6V491H608.6V493.3H1040V504.2H1071.6V411" stroke="#d8352a" stroke-width="2.2" fill="none"/>
<rect x="792.5" y="571.5" width="177" height="64" fill="#fff"/>
<rect x="792.5" y="571.5" width="52" height="64" fill="#002b6a" stroke="#d8e8ff" stroke-width="1.5"/>
<path d="M794,582.5H844" stroke="#e0301e" stroke-width="2.5"/>
<path d="M794,603H844M794,623.5H844" stroke="#c8dcf8" stroke-width="2"/>
</svg>
<div class="a" style="left:856px;top:573px;font-size:17.5px;line-height:20.4px;color:#1e1e1e;white-space:nowrap;width:113px;overflow:hidden">Channel2-Ref<br>lower limit<br>upper limit</div>
<div class="a" style="left:0;top:662px;width:1080px;height:20px;background:#f2f2f2"></div>
<div class="lbl" style="left:22px;top:664px;width:80px;text-align:center;font-size:16.5px">20</div>
<div class="lbl" style="left:154px;top:664px;width:80px;text-align:center;font-size:16.5px">50</div>
<div class="lbl" style="left:254px;top:664px;width:80px;text-align:center;font-size:16.5px">100</div>
<div class="lbl" style="left:353px;top:664px;width:80px;text-align:center;font-size:16.5px">200</div>
<div class="lbl" style="left:492px;top:664px;width:80px;text-align:center;font-size:16.5px">f/Hz</div>
<div class="lbl" style="left:585px;top:664px;width:80px;text-align:center;font-size:16.5px">1000</div>
<div class="lbl" style="left:685px;top:664px;width:80px;text-align:center;font-size:16.5px">2000</div>
<div class="lbl" style="left:817px;top:664px;width:80px;text-align:center;font-size:16.5px">5000</div>
<div class="lbl" style="left:916px;top:664px;width:80px;text-align:center;font-size:16.5px">10k</div>
<div class="lbl" style="left:1016px;top:664px;width:80px;text-align:center;font-size:16.5px">20k</div>
<div class="a" style="left:0;top:47px;width:26px;height:446px;background:#f0f0f0;box-shadow:1px 0 1px rgba(0,0,0,0.15)"></div>
<div class="a" style="left:0;top:47px;width:25px;height:96px;background:#ffffff"></div>
<div class="a" style="left:0;top:142.5px;width:24px;height:1.5px;background:#a0a0a0"></div>
<div class="a" style="left:0;top:416px;width:21px;height:12px;background:#e4e4e4;border:1px solid #c8c8c8;border-left:none"></div>
<div class="a" style="left:0;top:439px;width:24px;height:1px;background:#c8c8c8"></div>
<div class="a" style="left:0;top:455px;width:14px;height:29px;background:#e4e4e4;border:1px solid #c0c0c0;border-left:none"></div>
<div class="a" style="left:124.5px;top:255px;width:272px;height:172.5px;background:#f0f0f0;border:1px solid #a8c4e0;box-shadow:1px 1px 7px rgba(0,0,0,0.22)"></div>
<div class="a" style="left:125.5px;top:256px;width:270px;height:33px;background:#ffffff"></div>
<div class="a" style="left:129.5px;top:264px;font-size:16.6px;line-height:18px;color:#2e2e2e;white-space:nowrap">Information</div>
<svg class="a" style="left:366px;top:265px" width="17" height="16"><path d="M1.5,1.5L14.5,14M14.5,1.5L1.5,14" stroke="#222" stroke-width="1.3"/></svg>
<svg class="a" style="left:138px;top:305px" width="46" height="46" viewBox="0 0 46 46">
<defs><radialGradient id="ig" cx="0.35" cy="0.3" r="0.8"><stop offset="0" stop-color="#6aa0f0"/><stop offset="0.5" stop-color="#2a60d0"/><stop offset="1" stop-color="#1a3aa0"/></radialGradient></defs>
<circle cx="22.5" cy="22.5" r="19.5" fill="#d0d4da" stroke="#8a8e94" stroke-width="1"/>
<circle cx="22.5" cy="22.5" r="17" fill="url(#ig)"/>
<circle cx="22.5" cy="13" r="2.6" fill="#f4f8ff"/>
<path d="M22.5,18.5V35" stroke="#f4f8ff" stroke-width="4.5" stroke-linecap="round"/>
</svg>
<div class="a" style="left:202px;top:310px;font-size:15.9px;line-height:18px;color:#2a2a2a;white-space:nowrap">Mouth equalization done</div>
<div class="a" style="left:213px;top:375.5px;width:95px;height:31.5px;background:#e5f1fb;border:2px solid #3a8ee0"></div>
<div class="a" style="left:250px;top:382px;font-size:16px;line-height:18px;color:#2a2a2a;transform:scaleX(0.9);transform-origin:0 0;white-space:nowrap">OK</div>
<svg class="a" style="left:236.5px;top:329px" width="16" height="22" viewBox="0 0 16 22"><path d="M1,1V17L5,13.2L8,20L10.6,18.8L7.7,12.3H13z" fill="#fff" stroke="#111" stroke-width="1.1" stroke-linejoin="round"/></svg>
<svg class="a" style="left:271.5px;top:395px" width="16" height="22" viewBox="0 0 16 22"><path d="M1,1V17L5,13.2L8,20L10.6,18.8L7.7,12.3H13z" fill="#fff" stroke="#111" stroke-width="1.1" stroke-linejoin="round"/></svg>
</div></body></html>
